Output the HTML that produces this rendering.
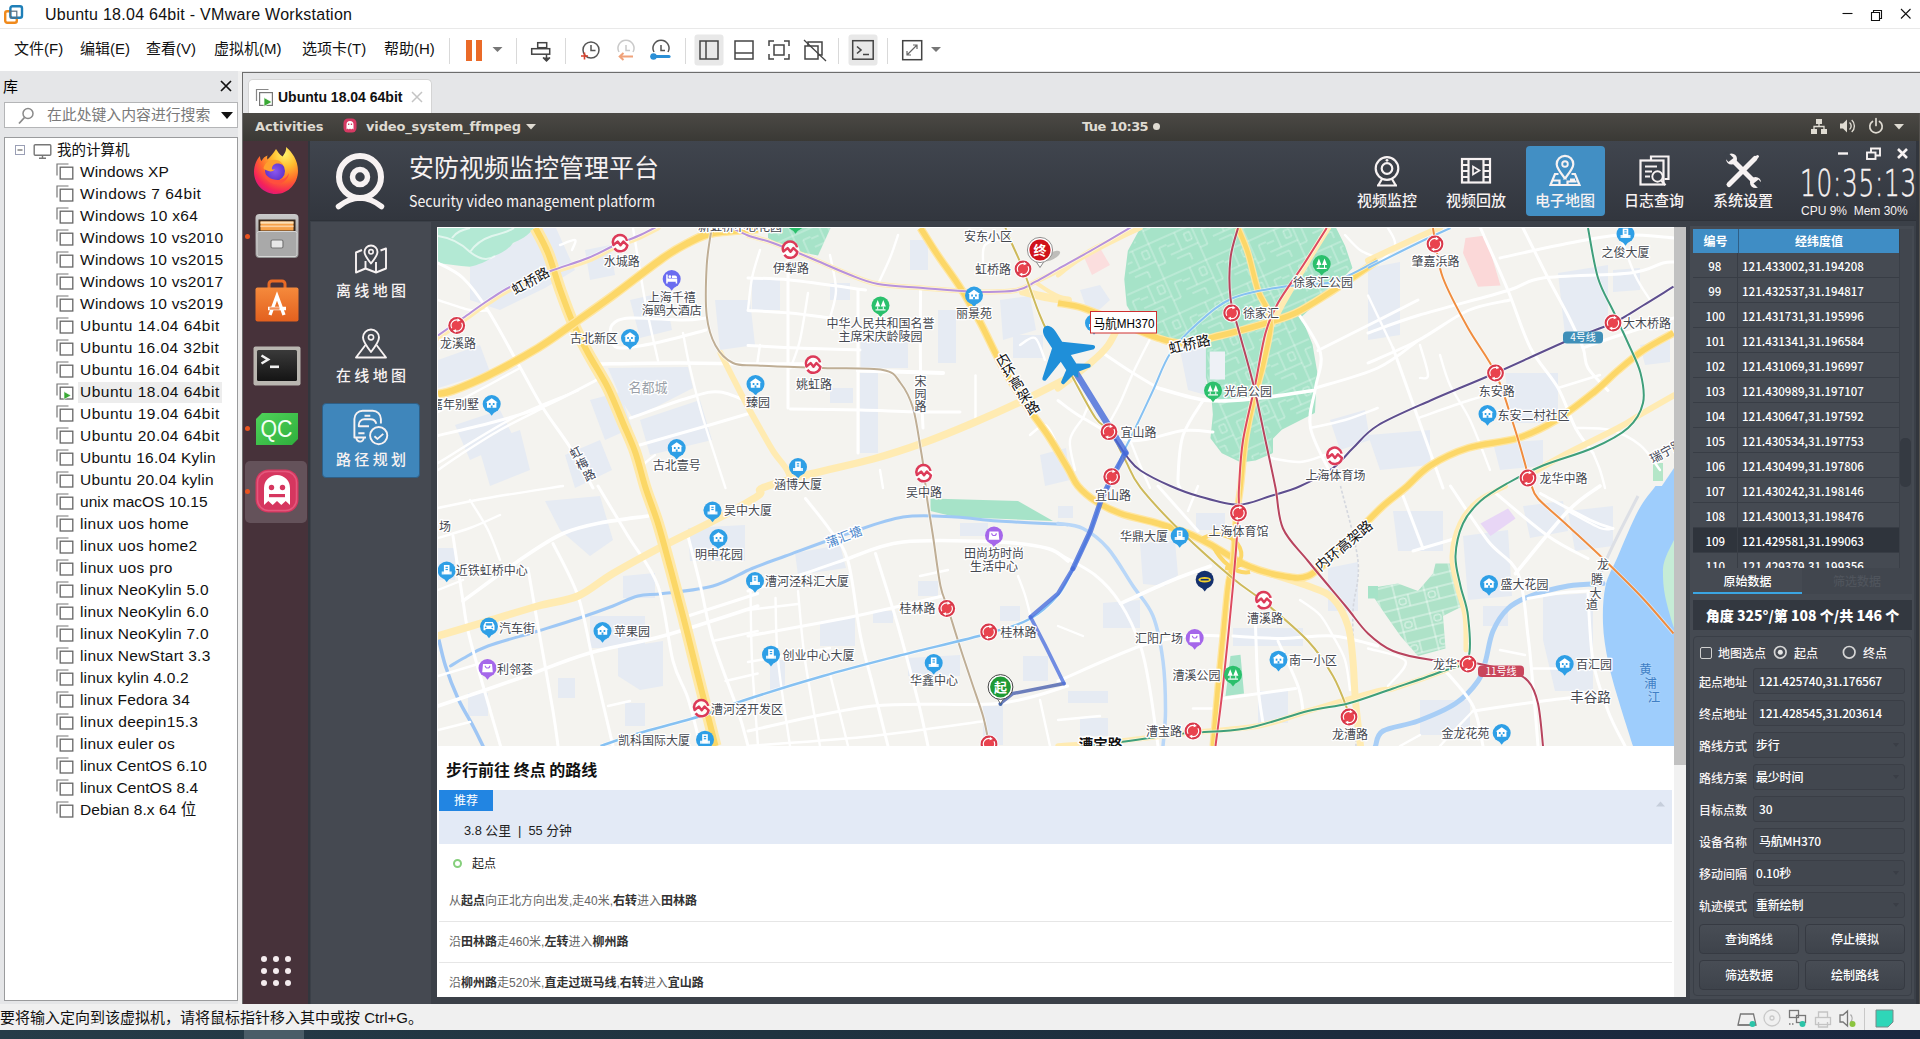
<!DOCTYPE html>
<html lang="zh-CN">
<head>
<meta charset="utf-8">
<title>Ubuntu 18.04 64bit - VMware Workstation</title>
<style>
*{box-sizing:border-box;margin:0;padding:0}
html,body{width:1920px;height:1039px;overflow:hidden;background:#fff}
body{font-family:"Liberation Sans","Noto Sans CJK SC",sans-serif;color:#000;position:relative}
.abs{position:absolute}
svg{display:block}
i{font-style:normal}
/* ---------- VMware chrome ---------- */
#titlebar{position:absolute;left:0;top:0;width:1920px;height:29px;background:#fff;border-bottom:1px solid #e9e9e9}
#titlebar .t{position:absolute;left:45px;top:5px;font-size:16px;letter-spacing:.27px;line-height:20px;color:#111;white-space:nowrap}
#menubar{position:absolute;left:0;top:29px;width:1920px;height:42px;background:#fff}
#menubar .m{position:absolute;top:10px;font-size:15px;line-height:20px;color:#111;white-space:nowrap}
#lib{position:absolute;left:0;top:71px;width:240px;height:933px;background:#e5e6e8}
#lib .hd{position:absolute;left:3px;top:6px;font-size:15px;line-height:20px}
#search{position:absolute;left:4px;top:31px;width:234px;height:26px;background:#fff;border:1px solid #b4b5b7}
#search .ph{position:absolute;left:42px;top:2px;font-size:14.85px;line-height:20px;color:#7a7a7a;white-space:nowrap}
#tree{position:absolute;left:4px;top:66px;width:234px;height:864px;background:#fff;border:1px solid #9a9b9d}
#tree .it{position:absolute;left:75px;height:20px;font-size:15.5px;line-height:20px;white-space:nowrap;color:#111}
#tree .ic{position:absolute;left:51px;width:18px;height:17px}
#vmarea{position:absolute;left:238px;top:71px;width:1682px;height:933px;background:#e5e6e8}
#vmarea:before{content:"";position:absolute;left:0;top:0;width:4px;height:933px;background:#f0f0f0}
#tabline{position:absolute;left:4px;top:1px;width:1678px;height:1px;background:#6d6d6d}
#vline{position:absolute;left:4px;top:1px;width:1px;height:932px;background:#6d6d6d}
#tab{position:absolute;left:10px;top:8px;width:184px;height:35px;background:#fff;border-radius:5px 5px 0 0;border:1px solid #d4d4d4;border-bottom:none}
#tab .tx{position:absolute;left:29px;top:7px;font-size:14px;font-weight:bold;line-height:20px;font-family:"Liberation Sans",sans-serif;white-space:nowrap;color:#111}
#statusbar{position:absolute;left:0;top:1004px;width:1920px;height:27px;background:#f0f0f0}
#statusbar .tx{position:absolute;left:0;top:4px;font-size:15px;line-height:20px;color:#111;white-space:nowrap}
#taskbar{position:absolute;left:0;top:1030px;width:1920px;height:9px;background:linear-gradient(90deg,#263c48,#1f3340 40%,#1c2b3d 70%,#1a2740)}
/* ---------- Ubuntu ---------- */
#vm{position:absolute;left:243px;top:113px;width:1677px;height:891px;background:#32363d;overflow:hidden}
#topbar{position:absolute;left:0;top:0;width:1677px;height:28px;background:linear-gradient(#4b4945,#3a3935);color:#dfdbd2;font-family:"DejaVu Sans","Liberation Sans",sans-serif;font-size:13px;font-weight:bold}
#topbar span{position:absolute;top:4px;line-height:20px;white-space:nowrap}
#dock{position:absolute;left:0;top:28px;width:65px;height:863px;background:#47323a}
#vm:after{content:"";position:absolute;right:0;top:0;width:1px;height:891px;background:#55524e}
/* ---------- App ---------- */
#app{position:absolute;left:67px;top:28px;width:1606px;height:863px;background:#3b4048;font-family:"Noto Sans CJK SC","Liberation Sans",sans-serif;color:#fff;font-weight:500}
#apphead{position:absolute;left:0;top:0;width:1606px;height:80px;background:linear-gradient(#40454e,#32363e);border-bottom:1px solid #2e3239}
#apptitle{font-size:25px;line-height:36px;font-weight:400;white-space:nowrap;color:#f7f2f2}
#appsub{font-size:15.5px;line-height:22px;transform-origin:0 50%;transform:scaleX(.914);font-weight:400;white-space:nowrap;color:#f7f2f2}
.nb{width:80px;text-align:center;font-size:15px;line-height:22px;margin-top:-1.5px;color:#f7f2f2;white-space:nowrap}
.lb{width:80px;text-align:center;font-size:15px;line-height:22px;letter-spacing:3.4px;text-indent:3.4px;color:#f7f2f2;white-space:nowrap;font-weight:500}
#lcd{font-family:"DejaVu Sans Light","DejaVu Sans","Liberation Sans",sans-serif;font-weight:200;font-size:34px;line-height:36px;letter-spacing:1px;color:#f7f2f2;white-space:nowrap;transform-origin:0 0;transform:scale(.728,1.09);-webkit-text-stroke:.45px #f7f2f2}
#cpu{font-size:12px;line-height:18px;white-space:nowrap;color:#f7f2f2;font-family:"Liberation Sans",sans-serif;font-weight:400}
#tbl .th{position:absolute;top:0;height:24px;background:#3f8dc5;text-align:center;font-size:12px;line-height:24px;font-weight:700;color:#fff}
#tbl .tr{position:absolute;left:0;width:206px;height:25px;border-bottom:1px solid #383d45;font-size:12px;line-height:25px;color:#fff}
#tbl .tr.sel{background:#2f343c}
#tbl .c1{position:absolute;left:0;width:45px;text-align:center;border-right:1px solid #383d45;height:25px}
#tbl .c1 i{display:inline-block;transform:scaleX(.96)}
#tbl .c2{position:absolute;left:49px;white-space:nowrap;transform-origin:0 50%;transform:scaleX(.96)}
.tabt{text-align:center;font-size:12px;line-height:22px}
#info{background:#333840;text-align:center;font-size:14px;font-weight:900;line-height:30px;white-space:nowrap}
.fl{font-size:12px;line-height:21px;white-space:nowrap;color:#f7f2f2}
.inp{width:152px;height:26px;border:1px solid #3a3e46;border-radius:3px;background:#42474f;font-size:12px;letter-spacing:-.2px;line-height:24px;white-space:nowrap;color:#fff}
.inp i{position:absolute;right:5px;top:10px;width:0;height:0;border:3px solid transparent;border-top:4px solid #3a3e46}
.btn{width:100px;height:30px;border:1px solid #363a42;border-radius:4px;background:linear-gradient(#484d55,#3e434b);text-align:center;font-size:12px;line-height:28px;color:#fff}
#web{background:#fff;overflow:hidden;font-weight:400}
#route{background:#fff;color:#222;font-weight:400}
.rt{font-size:16px;font-weight:700;line-height:22px;color:#111;white-space:nowrap}
.st{font-size:12px;line-height:20px;color:#666;white-space:nowrap;font-family:"Liberation Sans","Noto Sans CJK SC",sans-serif}
.st b{color:#333;font-weight:700}
</style>
</head>
<body>
<div id="titlebar">
<svg class="abs" style="left:4px;top:5px" width="20" height="19" viewBox="0 0 20 19"><rect x="1.2" y="6.2" width="11.6" height="11.6" rx="2" fill="none" stroke="#f08a1c" stroke-width="2.4"/><rect x="6.4" y="1.2" width="11.6" height="11.6" rx="2" fill="#fff" stroke="#1e7fb8" stroke-width="2.4"/><rect x="6.4" y="6.2" width="6.4" height="6.6" fill="none" stroke="#5a6f80" stroke-width="1.2"/></svg>
<div class="t">Ubuntu 18.04 64bit - VMware Workstation</div>
<svg class="abs" style="left:1835px;top:6px" width="80" height="18" viewBox="0 0 80 18"><g stroke="#111" stroke-width="1.1" fill="none"><path d="M7.5 7.5h10"/><path d="M36.5 6.5h8v8h-8z"/><path d="M38.5 6.5v-2h8v8h-2"/><path d="M66 3l9.5 9.5M75.500 3L66 12.500"/></g></svg>
</div>
<div id="menubar">
<div class="m" style="left:14px">文件(F)</div>
<div class="m" style="left:80px">编辑(E)</div>
<div class="m" style="left:146px">查看(V)</div>
<div class="m" style="left:214px">虚拟机(M)</div>
<div class="m" style="left:302px">选项卡(T)</div>
<div class="m" style="left:384px">帮助(H)</div>
<svg class="abs" style="left:440px;top:0" width="520" height="42" viewBox="440 29 520 42">
<g stroke="#d9d9d9" stroke-width="1"><path d="M449.500 38v26M516.500 38v26M565.500 38v26M685.500 38v26M838.500 38v26M887.500 38v26"/></g>
<rect x="466" y="40" width="6" height="21" fill="#ea6a28"/><rect x="476" y="40" width="6" height="21" fill="#ea6a28"/>
<path d="M492.500 47h10l-5 5z" fill="#777"/>
<g fill="none" stroke="#444" stroke-width="1.5"><rect x="537.700" y="42.700" width="9" height="5"/><rect x="531.700" y="48.700" width="18" height="5.500"/><path d="M546.500 54.500v6"/><path d="M543 57.500l3.500 3.500 3.500-3.500" fill="#444"/></g>
<g fill="none" stroke="#555" stroke-width="1.500"><circle cx="591" cy="50" r="8"/><path d="M591 45v5.500h4.500"/></g><path d="M584.500 52.500v7M581 56h7" stroke="#d8432e" stroke-width="1.600" fill="none"/>
<g fill="none" stroke="#c9c9c9" stroke-width="1.500"><path d="M619 52a8 8 0 1 1 14 0"/><path d="M626 45v5.500h4"/></g><path d="M633 56.500h-13M623.500 53l-3.800 3.500 3.800 3.500" stroke="#f0a27a" stroke-width="2" fill="none"/>
<g fill="none" stroke="#555" stroke-width="1.500"><path d="M654 52a8 8 0 1 1 14 0"/><path d="M661 45v5.500h4"/></g><path d="M652 56.500h17" stroke="#2a8fd6" stroke-width="3.200" stroke-linecap="round" fill="none"/><circle cx="653.500" cy="56.500" r="3.200" fill="#2a8fd6"/>
<rect x="694.500" y="34.500" width="29" height="31" rx="3" fill="#e8e8e8"/>
<g fill="none" stroke="#444" stroke-width="1.500"><rect x="700" y="41" width="18" height="18"/><path d="M706 41v18"/>
<rect x="735" y="41" width="18" height="18"/><path d="M735 53h18"/>
<rect x="774" y="45" width="10" height="10"/><path d="M769 46v-5h5M784 41h5v5M789 54v5h-5M774 59h-5v-5"/>
<path d="M808 46v-4h14v13h-4"/><rect x="805" y="46" width="13" height="13"/></g><path d="M804 40l22 21" stroke="#444" stroke-width="1.300"/>
<rect x="848.500" y="34.500" width="29" height="31" rx="3" fill="#e8e8e8"/>
<rect x="852.700" y="40.700" width="20.500" height="18.500" fill="none" stroke="#444" stroke-width="1.500"/><path d="M857 46.500l4 3.500-4 3.500M863 54.500h6" stroke="#444" stroke-width="1.600" fill="none"/>
<rect x="902.700" y="40.700" width="19" height="19" fill="none" stroke="#444" stroke-width="1.500"/><path d="M907 55l10-10M907 51v4h4M913 45h4v4" stroke="#666" stroke-width="1.200" fill="none"/>
<path d="M931 47h10l-5 5z" fill="#777"/>
</svg>
</div>
<div id="lib"><div class="hd">库</div>
<svg class="abs" style="left:219px;top:8px" width="14" height="14" viewBox="0 0 14 14"><path d="M2 2l10 10M12 2L2 12" stroke="#111" stroke-width="1.700" fill="none"/></svg>
<div id="search"><svg class="abs" style="left:12px;top:4px" width="18" height="18" viewBox="0 0 18 18"><circle cx="11" cy="6.500" r="5" fill="none" stroke="#8a8a8a" stroke-width="1.500"/><path d="M7.500 10.500L2 16.500" stroke="#8a8a8a" stroke-width="1.800"/></svg><div class="ph">在此处键入内容进行搜索</div><svg class="abs" style="left:215px;top:8px" width="14" height="9" viewBox="0 0 14 9"><path d="M1 1h12L7 8z" fill="#111"/></svg></div>
<div id="tree">
<svg class="abs" style="left:10px;top:5.500px" width="40" height="16" viewBox="0 0 40 16"><rect x="0.500" y="1.500" width="9" height="9" fill="#fff" stroke="#9a9fb5"/><path d="M2.500 6h5" stroke="#444" stroke-width="1"/><rect x="19.200" y="0.700" width="16.600" height="10.600" rx="1" fill="#fff" stroke="#777" stroke-width="1.400"/><path d="M24 14.300h7M27.500 11.500v2.500" stroke="#777" stroke-width="1.400"/></svg>
<div class="it" style="left:52px;top:2px;font-size:14.500px">我的计算机</div>
<svg class="ic" style="top:25px" viewBox="0 0 18 17"><path d="M1 12.500V1h11.500" fill="none" stroke="#777" stroke-width="1.200"/><rect x="4.200" y="4.200" width="12.600" height="11.800" fill="#fff" stroke="#666" stroke-width="1.300"/></svg>
<div class="it" style="top:24px;letter-spacing:0.11px">Windows XP</div>
<svg class="ic" style="top:47px" viewBox="0 0 18 17"><path d="M1 12.500V1h11.500" fill="none" stroke="#777" stroke-width="1.200"/><rect x="4.200" y="4.200" width="12.600" height="11.800" fill="#fff" stroke="#666" stroke-width="1.300"/></svg>
<div class="it" style="top:46px;letter-spacing:0.513px">Windows 7 64bit</div>
<svg class="ic" style="top:69px" viewBox="0 0 18 17"><path d="M1 12.500V1h11.500" fill="none" stroke="#777" stroke-width="1.200"/><rect x="4.200" y="4.200" width="12.600" height="11.800" fill="#fff" stroke="#666" stroke-width="1.300"/></svg>
<div class="it" style="top:68px;letter-spacing:0.314px">Windows 10 x64</div>
<svg class="ic" style="top:91px" viewBox="0 0 18 17"><path d="M1 12.500V1h11.500" fill="none" stroke="#777" stroke-width="1.200"/><rect x="4.200" y="4.200" width="12.600" height="11.800" fill="#fff" stroke="#666" stroke-width="1.300"/></svg>
<div class="it" style="top:90px;letter-spacing:0.271px">Windows 10 vs2010</div>
<svg class="ic" style="top:113px" viewBox="0 0 18 17"><path d="M1 12.500V1h11.500" fill="none" stroke="#777" stroke-width="1.200"/><rect x="4.200" y="4.200" width="12.600" height="11.800" fill="#fff" stroke="#666" stroke-width="1.300"/></svg>
<div class="it" style="top:112px;letter-spacing:0.271px">Windows 10 vs2015</div>
<svg class="ic" style="top:135px" viewBox="0 0 18 17"><path d="M1 12.500V1h11.500" fill="none" stroke="#777" stroke-width="1.200"/><rect x="4.200" y="4.200" width="12.600" height="11.800" fill="#fff" stroke="#666" stroke-width="1.300"/></svg>
<div class="it" style="top:134px;letter-spacing:0.271px">Windows 10 vs2017</div>
<svg class="ic" style="top:157px" viewBox="0 0 18 17"><path d="M1 12.500V1h11.500" fill="none" stroke="#777" stroke-width="1.200"/><rect x="4.200" y="4.200" width="12.600" height="11.800" fill="#fff" stroke="#666" stroke-width="1.300"/></svg>
<div class="it" style="top:156px;letter-spacing:0.271px">Windows 10 vs2019</div>
<svg class="ic" style="top:179px" viewBox="0 0 18 17"><path d="M1 12.500V1h11.500" fill="none" stroke="#777" stroke-width="1.200"/><rect x="4.200" y="4.200" width="12.600" height="11.800" fill="#fff" stroke="#666" stroke-width="1.300"/></svg>
<div class="it" style="top:178px;letter-spacing:0.483px">Ubuntu 14.04 64bit</div>
<svg class="ic" style="top:201px" viewBox="0 0 18 17"><path d="M1 12.500V1h11.500" fill="none" stroke="#777" stroke-width="1.200"/><rect x="4.200" y="4.200" width="12.600" height="11.800" fill="#fff" stroke="#666" stroke-width="1.300"/></svg>
<div class="it" style="top:200px;letter-spacing:0.456px">Ubuntu 16.04 32bit</div>
<svg class="ic" style="top:223px" viewBox="0 0 18 17"><path d="M1 12.500V1h11.500" fill="none" stroke="#777" stroke-width="1.200"/><rect x="4.200" y="4.200" width="12.600" height="11.800" fill="#fff" stroke="#666" stroke-width="1.300"/></svg>
<div class="it" style="top:222px;letter-spacing:0.483px">Ubuntu 16.04 64bit</div>
<div class="abs" style="left:73px;top:244px;width:144px;height:21px;background:#ededed"></div>
<svg class="ic" style="top:245px" viewBox="0 0 18 17"><path d="M1 12.500V1h11.500" fill="none" stroke="#777" stroke-width="1.200"/><rect x="4.200" y="4.200" width="12.600" height="11.800" fill="#fff" stroke="#666" stroke-width="1.300"/><path d="M8 8.500v8l7-4z" fill="#3aa935" stroke="#fff" stroke-width=".6"/></svg>
<div class="it" style="top:244px;letter-spacing:0.483px">Ubuntu 18.04 64bit</div>
<svg class="ic" style="top:267px" viewBox="0 0 18 17"><path d="M1 12.500V1h11.500" fill="none" stroke="#777" stroke-width="1.200"/><rect x="4.200" y="4.200" width="12.600" height="11.800" fill="#fff" stroke="#666" stroke-width="1.300"/></svg>
<div class="it" style="top:266px;letter-spacing:0.483px">Ubuntu 19.04 64bit</div>
<svg class="ic" style="top:289px" viewBox="0 0 18 17"><path d="M1 12.500V1h11.500" fill="none" stroke="#777" stroke-width="1.200"/><rect x="4.200" y="4.200" width="12.600" height="11.800" fill="#fff" stroke="#666" stroke-width="1.300"/></svg>
<div class="it" style="top:288px;letter-spacing:0.483px">Ubuntu 20.04 64bit</div>
<svg class="ic" style="top:311px" viewBox="0 0 18 17"><path d="M1 12.500V1h11.500" fill="none" stroke="#777" stroke-width="1.200"/><rect x="4.200" y="4.200" width="12.600" height="11.800" fill="#fff" stroke="#666" stroke-width="1.300"/></svg>
<div class="it" style="top:310px;letter-spacing:0.272px">Ubuntu 16.04 Kylin</div>
<svg class="ic" style="top:333px" viewBox="0 0 18 17"><path d="M1 12.500V1h11.500" fill="none" stroke="#777" stroke-width="1.200"/><rect x="4.200" y="4.200" width="12.600" height="11.800" fill="#fff" stroke="#666" stroke-width="1.300"/></svg>
<div class="it" style="top:332px;letter-spacing:0.311px">Ubuntu 20.04 kylin</div>
<svg class="ic" style="top:355px" viewBox="0 0 18 17"><path d="M1 12.500V1h11.500" fill="none" stroke="#777" stroke-width="1.200"/><rect x="4.200" y="4.200" width="12.600" height="11.800" fill="#fff" stroke="#666" stroke-width="1.300"/></svg>
<div class="it" style="top:354px;letter-spacing:0.006px">unix macOS 10.15</div>
<svg class="ic" style="top:377px" viewBox="0 0 18 17"><path d="M1 12.500V1h11.500" fill="none" stroke="#777" stroke-width="1.200"/><rect x="4.200" y="4.200" width="12.600" height="11.800" fill="#fff" stroke="#666" stroke-width="1.300"/></svg>
<div class="it" style="top:376px;letter-spacing:0.343px">linux uos home</div>
<svg class="ic" style="top:399px" viewBox="0 0 18 17"><path d="M1 12.500V1h11.500" fill="none" stroke="#777" stroke-width="1.200"/><rect x="4.200" y="4.200" width="12.600" height="11.800" fill="#fff" stroke="#666" stroke-width="1.300"/></svg>
<div class="it" style="top:398px;letter-spacing:0.307px">linux uos home2</div>
<svg class="ic" style="top:421px" viewBox="0 0 18 17"><path d="M1 12.500V1h11.500" fill="none" stroke="#777" stroke-width="1.200"/><rect x="4.200" y="4.200" width="12.600" height="11.800" fill="#fff" stroke="#666" stroke-width="1.300"/></svg>
<div class="it" style="top:420px;letter-spacing:0.369px">linux uos pro</div>
<svg class="ic" style="top:443px" viewBox="0 0 18 17"><path d="M1 12.500V1h11.500" fill="none" stroke="#777" stroke-width="1.200"/><rect x="4.200" y="4.200" width="12.600" height="11.800" fill="#fff" stroke="#666" stroke-width="1.300"/></svg>
<div class="it" style="top:442px;letter-spacing:0.261px">linux NeoKylin 5.0</div>
<svg class="ic" style="top:465px" viewBox="0 0 18 17"><path d="M1 12.500V1h11.500" fill="none" stroke="#777" stroke-width="1.200"/><rect x="4.200" y="4.200" width="12.600" height="11.800" fill="#fff" stroke="#666" stroke-width="1.300"/></svg>
<div class="it" style="top:464px;letter-spacing:0.261px">linux NeoKylin 6.0</div>
<svg class="ic" style="top:487px" viewBox="0 0 18 17"><path d="M1 12.500V1h11.500" fill="none" stroke="#777" stroke-width="1.200"/><rect x="4.200" y="4.200" width="12.600" height="11.800" fill="#fff" stroke="#666" stroke-width="1.300"/></svg>
<div class="it" style="top:486px;letter-spacing:0.261px">linux NeoKylin 7.0</div>
<svg class="ic" style="top:509px" viewBox="0 0 18 17"><path d="M1 12.500V1h11.500" fill="none" stroke="#777" stroke-width="1.200"/><rect x="4.200" y="4.200" width="12.600" height="11.800" fill="#fff" stroke="#666" stroke-width="1.300"/></svg>
<div class="it" style="top:508px;letter-spacing:0.267px">linux NewStart 3.3</div>
<svg class="ic" style="top:531px" viewBox="0 0 18 17"><path d="M1 12.500V1h11.500" fill="none" stroke="#777" stroke-width="1.200"/><rect x="4.200" y="4.200" width="12.600" height="11.800" fill="#fff" stroke="#666" stroke-width="1.300"/></svg>
<div class="it" style="top:530px;letter-spacing:0.171px">linux kylin 4.0.2</div>
<svg class="ic" style="top:553px" viewBox="0 0 18 17"><path d="M1 12.500V1h11.500" fill="none" stroke="#777" stroke-width="1.200"/><rect x="4.200" y="4.200" width="12.600" height="11.800" fill="#fff" stroke="#666" stroke-width="1.300"/></svg>
<div class="it" style="top:552px;letter-spacing:0.213px">linux Fedora 34</div>
<svg class="ic" style="top:575px" viewBox="0 0 18 17"><path d="M1 12.500V1h11.500" fill="none" stroke="#777" stroke-width="1.200"/><rect x="4.200" y="4.200" width="12.600" height="11.800" fill="#fff" stroke="#666" stroke-width="1.300"/></svg>
<div class="it" style="top:574px;letter-spacing:0.337px">linux deepin15.3</div>
<svg class="ic" style="top:597px" viewBox="0 0 18 17"><path d="M1 12.500V1h11.500" fill="none" stroke="#777" stroke-width="1.200"/><rect x="4.200" y="4.200" width="12.600" height="11.800" fill="#fff" stroke="#666" stroke-width="1.300"/></svg>
<div class="it" style="top:596px;letter-spacing:0.264px">linux euler os</div>
<svg class="ic" style="top:619px" viewBox="0 0 18 17"><path d="M1 12.500V1h11.500" fill="none" stroke="#777" stroke-width="1.200"/><rect x="4.200" y="4.200" width="12.600" height="11.800" fill="#fff" stroke="#666" stroke-width="1.300"/></svg>
<div class="it" style="top:618px;letter-spacing:0.065px">linux CentOS 6.10</div>
<svg class="ic" style="top:641px" viewBox="0 0 18 17"><path d="M1 12.500V1h11.500" fill="none" stroke="#777" stroke-width="1.200"/><rect x="4.200" y="4.200" width="12.600" height="11.800" fill="#fff" stroke="#666" stroke-width="1.300"/></svg>
<div class="it" style="top:640px;letter-spacing:0.069px">linux CentOS 8.4</div>
<svg class="ic" style="top:663px" viewBox="0 0 18 17"><path d="M1 12.500V1h11.500" fill="none" stroke="#777" stroke-width="1.200"/><rect x="4.200" y="4.200" width="12.600" height="11.800" fill="#fff" stroke="#666" stroke-width="1.300"/></svg>
<div class="it" style="top:662px;letter-spacing:0.053px">Debian 8.x 64 位</div>
</div></div>
<div id="vmarea"><div id="tabline"></div><div id="vline"></div><div id="tab"><svg class="abs" style="left:6px;top:8px" width="20" height="20" viewBox="0 0 20 20"><path d="M1.500 13V1.500h12" fill="none" stroke="#888" stroke-width="1.200"/><rect x="4.600" y="4.600" width="12.800" height="12.800" fill="#fff" stroke="#777" stroke-width="1.200"/><path d="M9 9.500v9l8-4.500z" fill="#3aa935" stroke="#fff" stroke-width=".7"/></svg><div class="tx">Ubuntu 18.04 64bit</div><svg class="abs" style="left:161px;top:10px" width="14" height="14" viewBox="0 0 14 14"><path d="M2 2l10 10M12 2L2 12" stroke="#c4c4c4" stroke-width="1.500" fill="none"/></svg></div></div>
<div id="vm">
<div id="topbar">
<span style="left:12px">Activities</span>
<svg class="abs" style="left:100px;top:5px" width="14" height="15" viewBox="0 0 14 15"><rect x="0.500" y="0.500" width="13" height="14" rx="4.500" fill="#d63a63"/><path d="M3.500 11.500V6.500a3.500 3.500 0 0 1 7 0v5l-1.200-1-1.150 1-1.150-1-1.150 1-1.150-1z" fill="#fff"/><rect x="5" y="5.500" width="1.300" height="1.500" fill="#d63a63"/><rect x="7.800" y="5.500" width="1.300" height="1.500" fill="#d63a63"/></svg>
<span style="left:123px;letter-spacing:-.15px">video_system_ffmpeg</span>
<svg class="abs" style="left:282px;top:10px" width="12" height="8" viewBox="0 0 12 8"><path d="M1 1h10L6 6.500z" fill="#dfdbd2"/></svg>
<span style="left:839px;letter-spacing:-.6px">Tue 10:35</span>
<div class="abs" style="left:910px;top:10px;width:7px;height:7px;border-radius:50%;background:#dfdbd2"></div>
<svg class="abs" style="left:1565px;top:4px" width="100" height="20" viewBox="1808 117 100 20"><g fill="#dfdbd2"><rect x="1816" y="119" width="6" height="5"/><rect x="1811" y="129" width="6" height="5"/><rect x="1821" y="129" width="6" height="5"/></g><path d="M1819 124v3M1814 129v-2.500h10v2.500" stroke="#dfdbd2" stroke-width="1.300" fill="none"/><path d="M1840 123.500h3l4-4v13l-4-4h-3z" fill="#dfdbd2"/><path d="M1849.500 122.500a4.500 4.500 0 0 1 0 7M1851.700 120a8 8 0 0 1 0 12" stroke="#dfdbd2" stroke-width="1.400" fill="none"/><path d="M1872.500 121.500a6.200 6.200 0 1 0 7 0M1876 118.500v7" stroke="#dfdbd2" stroke-width="1.700" fill="none" stroke-linecap="round"/><path d="M1894 124h10l-5 5.500z" fill="#dfdbd2"/></svg>
</div>
<div id="dock">
<div class="abs" style="left:2px;top:320px;width:62px;height:62px;border-radius:5px;background:#64525a"></div>
<div class="abs" style="left:2px;top:92.5px;width:5px;height:5px;border-radius:50%;background:#e95420"></div>
<div class="abs" style="left:2px;top:284.5px;width:5px;height:5px;border-radius:50%;background:#e95420"></div>
<div class="abs" style="left:2px;top:347.5px;width:5px;height:5px;border-radius:50%;background:#e95420"></div>
<svg class="abs" style="left:9px;top:5px" width="48" height="50" viewBox="0 0 48 50">
<defs><radialGradient id="ff1" cx="70%" cy="15%" r="95%"><stop offset="0" stop-color="#fff36b"/><stop offset=".3" stop-color="#ffbd2f"/><stop offset=".6" stop-color="#ff6a2b"/><stop offset=".85" stop-color="#f5225a"/><stop offset="1" stop-color="#d41786"/></radialGradient>
<radialGradient id="ff2" cx="50%" cy="50%" r="60%"><stop offset="0" stop-color="#8a57f0"/><stop offset="1" stop-color="#5a2fc4"/></radialGradient></defs>
<path d="M24 3c2 3 3 5 6.500 7.500C35 5 34 2 34 1c6 5 12 13 12 24 0 12-9.500 23-22 23S2 38 2 26c0-7 3-13 6-16 0 2 .5 4 1.500 5 1.500-3 4-5 6-5.500-.5 1.500-.5 3 0 4 3-3 6-6 8.500-10.500z" fill="url(#ff1)"/>
<circle cx="23" cy="25" r="10" fill="url(#ff2)"/>
<path d="M11.500 22c2-7 9-10 15-7.500 2.500 1 4 3 4.500 5-2.500-2-5.500-2.500-8-1.500-2.500 1-3.500 3.500-3 5.500 1 .2 2 0 3-.5-1 2-4 3-6.500 2-3-1-5-2-5-3z" fill="#ffa02e"/>
<path d="M11 24c0 8 6 14 13.500 14 7 0 12-5 12.500-11-2 4.500-6 7-11 7-7 0-12.500-4-15-10z" fill="#ff4f3e"/>
</svg>
<svg class="abs" style="left:11px;top:72px" width="46" height="46" viewBox="0 0 46 46">
<defs><linearGradient id="fg" x1="0" y1="0" x2="0" y2="1"><stop offset="0" stop-color="#c9c9c9"/><stop offset="1" stop-color="#8f8f8f"/></linearGradient></defs>
<rect x="1.500" y="1" width="43" height="44" rx="4" fill="url(#fg)"/><rect x="4.500" y="6.500" width="37" height="12" fill="#3a2a1e"/>
<rect x="6.500" y="8.500" width="33" height="9" fill="#f6a24a"/><rect x="6.500" y="8.500" width="33" height="2.200" fill="#fde1b8"/><rect x="6.500" y="12.500" width="33" height="1.600" fill="#fbd0a0"/>
<rect x="3" y="18.500" width="40" height="25" rx="2" fill="#a9a9a9" stroke="#d6d6d6" stroke-width="1"/><rect x="17" y="27" width="12" height="8" rx="1.500" fill="#e8e8e8" stroke="#777" stroke-width="1.200"/></svg>
<svg class="abs" style="left:11px;top:136px" width="46" height="46" viewBox="0 0 46 46">
<defs><linearGradient id="sg" x1="0" y1="0" x2="0" y2="1"><stop offset="0" stop-color="#f58a3c"/><stop offset="1" stop-color="#e3601e"/></linearGradient></defs>
<path d="M15 12V7a3 3 0 0 1 3-3h10a3 3 0 0 1 3 3v5" fill="none" stroke="#e86a25" stroke-width="3"/>
<rect x="1.500" y="10.500" width="43" height="34" rx="2" fill="url(#sg)"/>
<path d="M16 38l7-19 7 19M14 31.500h18" stroke="#fff" stroke-width="3.300" fill="none"/><rect x="15.500" y="30.300" width="10" height="2.400" fill="#f3905a"/></svg>
<svg class="abs" style="left:10px;top:205px" width="48" height="40" viewBox="0 0 48 40">
<defs><linearGradient id="tg" x1="0" y1="0" x2="0" y2="1"><stop offset="0" stop-color="#3a3a3a"/><stop offset="1" stop-color="#141414"/></linearGradient></defs>
<rect x="0.500" y="0.500" width="47" height="39" rx="2" fill="#b9b6b0"/><rect x="4" y="4" width="40" height="31" rx="1.500" fill="url(#tg)"/>
<path d="M8.500 9.500l6.500 4-6.500 4" stroke="#f1f1f1" stroke-width="2.600" fill="none"/><rect x="17" y="19.500" width="9" height="2.600" fill="#f1f1f1"/></svg>
<svg class="abs" style="left:12px;top:271px" width="44" height="34" viewBox="0 0 44 34">
<defs><linearGradient id="qg" x1="0" y1="0" x2="1" y2="1"><stop offset="0" stop-color="#4fd45a"/><stop offset="1" stop-color="#2fae3c"/></linearGradient></defs>
<path d="M7 1h36v26l-6 6H1V7z" fill="url(#qg)"/><text x="21.500" y="25" font-family="Liberation Sans,sans-serif" font-size="24" text-anchor="middle" fill="#f3fff3" textLength="32" lengthAdjust="spacingAndGlyphs">QC</text></svg>
<svg class="abs" style="left:12px;top:328px" width="44" height="44" viewBox="0 0 44 44">
<rect x="0.500" y="0.500" width="43" height="43" rx="13" fill="#d6365f"/><rect x="2.500" y="2.500" width="39" height="39" rx="11" fill="none" stroke="#e4577c" stroke-width="1.500"/>
<path d="M9 36V19a13 13 0 0 1 26 0v17l-4.300-4-4.400 4-4.300-4-4.300 4-4.400-4z" fill="#fff"/>
<circle cx="16.500" cy="18.500" r="2.700" fill="#d6365f"/><circle cx="27.500" cy="18.500" r="2.700" fill="#d6365f"/><rect x="14" y="25" width="16" height="3.200" fill="#d6365f"/></svg>
<svg class="abs" style="left:17px;top:814px" width="32" height="32" viewBox="0 0 32 32"><circle cx="4" cy="4" r="3" fill="#f4ecee"/><circle cx="4" cy="16" r="3" fill="#f4ecee"/><circle cx="4" cy="28" r="3" fill="#f4ecee"/><circle cx="16" cy="4" r="3" fill="#f4ecee"/><circle cx="16" cy="16" r="3" fill="#f4ecee"/><circle cx="16" cy="28" r="3" fill="#f4ecee"/><circle cx="28" cy="4" r="3" fill="#f4ecee"/><circle cx="28" cy="16" r="3" fill="#f4ecee"/><circle cx="28" cy="28" r="3" fill="#f4ecee"/></svg>
</div>
<div id="app">
<div id="apphead">
<svg class="abs" style="left:24px;top:9px" width="52" height="62" viewBox="334 150 52 62"><circle cx="360" cy="177" r="21" fill="none" stroke="#f7f2f2" stroke-width="6"/><circle cx="360" cy="177" r="7.500" fill="none" stroke="#f7f2f2" stroke-width="5.500"/><path d="M338.500 206.500q21.500-17 43 0" fill="none" stroke="#f7f2f2" stroke-width="5.500" stroke-linecap="round"/></svg>
<div class="abs" id="apptitle" style="left:99px;top:7px">安防视频监控管理平台</div>
<div class="abs" id="appsub" style="left:99px;top:48px">Security video management platform</div>
<div class="abs" style="left:1216px;top:5px;width:79px;height:70px;border-radius:4px;background:#428fc4"></div>
<div class="abs nb" style="left:1037px;top:49px">视频监控</div>
<div class="abs nb" style="left:1126px;top:49px">视频回放</div>
<div class="abs nb" style="left:1215px;top:49px">电子地图</div>
<div class="abs nb" style="left:1304px;top:49px">日志查询</div>
<div class="abs nb" style="left:1393px;top:49px">系统设置</div>
<svg class="abs" style="left:1050px;top:9px" width="420" height="42" viewBox="1360 150 420 42">
<g fill="none" stroke="#f7f2f2" stroke-width="2.200"><circle cx="1387" cy="168.500" r="11.300"/><circle cx="1387" cy="168.500" r="5.300"/><path d="M1382 179l-3.500 6M1392 179l3.500 6M1377 185.500h20"/></g><circle cx="1387" cy="160.300" r="1.400" fill="#f7f2f2"/>
<g fill="none" stroke="#f7f2f2" stroke-width="2.200"><rect x="1462" y="159" width="28" height="23.500"/><path d="M1468.500 159v23.500M1483.500 159v23.500M1462 165h6.500M1462 171h6.500M1462 177h6.500M1483.500 165h6.500M1483.500 171h6.500M1483.500 177h6.500"/><path d="M1473 166.500v8l6.500-4z" stroke-width="1.700"/></g>
<g fill="none" stroke="#f7f2f2" stroke-width="2.200"><path d="M1565 178.500c-5-6.500-8.300-10.500-8.300-14.300a8.300 8.300 0 0 1 16.600 0c0 3.800-3.300 7.800-8.300 14.300z"/><circle cx="1565" cy="164" r="2.800" stroke-width="1.900"/><path d="M1558.500 174h-3.500l-4.500 11h29l-4.500-11h-3.500M1553 180.500h6.500v4.500M1570 179.500h5M1567.500 184.500v-3h9"/></g>
<g fill="none" stroke="#f7f2f2" stroke-width="2.200"><path d="M1651 160v-3.500h17.500v22.500h-4"/><rect x="1640.500" y="160.500" width="23" height="24"/><path d="M1645 166.500h12M1645 171.500h7M1645 176.500h5" stroke-width="1.800"/><circle cx="1657.500" cy="176.500" r="5.200" fill="#3b4049" stroke-width="1.900"/><path d="M1661.300 180.500l4.200 4.700" stroke-width="2.200"/></g>
<g stroke="#f7f2f2" fill="none" stroke-linecap="round"><path d="M1729 184.500l26-26" stroke-width="5"/><path d="M1746 167l11.500-10.500" stroke-width="3"/><path d="M1733 160.500l22 22" stroke-width="5"/></g>
<circle cx="1731.500" cy="159" r="5.500" fill="#f7f2f2"/><path d="M1727 151.500l6.500 6.500-5 4-6-6.500z" fill="#3d424b"/><circle cx="1755.500" cy="182.500" r="5.500" fill="#f7f2f2"/><path d="M1760 190l-6.500-6.500 5-4 6 6.500z" fill="#383d46"/>
</svg>
<svg class="abs" style="left:1524px;top:5px" width="80" height="16" viewBox="1834 146 80 16"><path d="M1838 153.500h10" stroke="#f7f2f2" stroke-width="2.400"/><g fill="none" stroke="#f7f2f2" stroke-width="1.900"><rect x="1867" y="152.500" width="8.500" height="6.500"/><path d="M1871 152v-3.500h9v7h-4"/></g><path d="M1898 149l9 9M1907 149l-9 9" stroke="#f7f2f2" stroke-width="2.600"/></svg>
<div class="abs" id="lcd" style="left:1490px;top:22px">10:35:13</div>
<div class="abs" id="cpu" style="left:1491px;top:61px">CPU 9%&nbsp; Mem 30%</div>
</div>
<div class="abs" style="left:1px;top:81px;width:120px;height:782px;background:#454951"></div>
<div class="abs" style="left:12px;top:262px;width:98px;height:75px;border-radius:4px;background:#3f86bb;border:1px solid #2f5f86"></div>
<div class="abs lb" style="left:21px;top:138.0px">离线地图</div>
<div class="abs lb" style="left:21px;top:222.5px">在线地图</div>
<div class="abs lb" style="left:21px;top:307.0px">路径规划</div>
<svg class="abs" style="left:40px;top:99px" width="44" height="210" viewBox="350 240 44 210">
<g fill="none" stroke="#f7f2f2" stroke-width="1.900" stroke-linejoin="round"><path d="M1 1" /><path d="M362 250l-6 2.500v20l9.500-4 10.500 4 10-4v-20l-5.500 2"/><path d="M365.500 261v7.500M376 262v10.500"/><path d="M371 263.500c-4-5-6.500-8.200-6.500-11.500a6.500 6.500 0 0 1 13 0c0 3.300-2.500 6.500-6.500 11.500z"/><circle cx="371" cy="251.800" r="2.200" stroke-width="1.600"/>
<path d="M371 352c-5-6.500-8-10.500-8-14.500a8 8 0 0 1 16 0c0 4-3 8-8 14.500z"/><circle cx="371" cy="337.300" r="2.600" stroke-width="1.600"/><path d="M365.500 345l-9.500 12.500h30l-9.500-12.500"/>
<path d="M380.900 423.500V419a8.200 8.200 0 0 0-8.200-8.200h-10.100a8.200 8.200 0 0 0-8.200 8.200V437.500H366"/><path d="M369 426.200h-10.200v-1.500a5.500 5.500 0 0 1 5.500-5.500h6a6 6 0 0 1 6 4.600"/><path d="M364.500 415.800h5.800M358.300 433.200h6.200"/><path d="M356.400 438a3.600 3.600 0 0 0 7.200 0"/><circle cx="378.700" cy="435.600" r="8.600"/><path d="M374.400 436.300l3.100 2.600 5.800-5"/></g></svg>
<div class="abs" style="left:1380px;top:85px;width:224px;height:773px;background:#454a52"></div>
<div class="abs" id="tbl" style="left:1383px;top:88px;width:206px;height:339px;overflow:hidden;background:#454a52">
<div class="th" style="left:0;width:45px">编号</div><div class="th" style="left:45px;width:161px;border-left:1px solid #2f5f86">经纬度值</div>
<div class="tr" style="top:24px"><span class="c1"><i>98</i></span><span class="c2">121.433002,31.194208</span></div>
<div class="tr" style="top:49px"><span class="c1"><i>99</i></span><span class="c2">121.432537,31.194817</span></div>
<div class="tr" style="top:74px"><span class="c1"><i>100</i></span><span class="c2">121.431731,31.195996</span></div>
<div class="tr" style="top:99px"><span class="c1"><i>101</i></span><span class="c2">121.431341,31.196584</span></div>
<div class="tr" style="top:124px"><span class="c1"><i>102</i></span><span class="c2">121.431069,31.196997</span></div>
<div class="tr" style="top:149px"><span class="c1"><i>103</i></span><span class="c2">121.430989,31.197107</span></div>
<div class="tr" style="top:174px"><span class="c1"><i>104</i></span><span class="c2">121.430647,31.197592</span></div>
<div class="tr" style="top:199px"><span class="c1"><i>105</i></span><span class="c2">121.430534,31.197753</span></div>
<div class="tr" style="top:224px"><span class="c1"><i>106</i></span><span class="c2">121.430499,31.197806</span></div>
<div class="tr" style="top:249px"><span class="c1"><i>107</i></span><span class="c2">121.430242,31.198146</span></div>
<div class="tr" style="top:274px"><span class="c1"><i>108</i></span><span class="c2">121.430013,31.198476</span></div>
<div class="tr sel" style="top:299px"><span class="c1"><i>109</i></span><span class="c2">121.429581,31.199063</span></div>
<div class="tr" style="top:324px"><span class="c1"><i>110</i></span><span class="c2">121.429379,31.199356</span></div>
</div>
<div class="abs" style="left:1589px;top:88px;width:13px;height:339px;background:#41464e;border-left:1px solid #3a3f47"></div>
<div class="abs" style="left:1590px;top:297px;width:11px;height:49px;border-radius:5px;background:#353a42"></div>
<div class="abs" style="left:1492px;top:427px;width:110px;height:26px;background:#41464e"></div>
<div class="abs tabt" style="left:1383px;top:429px;width:109px;color:#fff">原始数据</div>
<div class="abs tabt" style="left:1492px;top:429px;width:110px;color:#4f545c">筛选数据</div>
<div class="abs" style="left:1383px;top:451px;width:109px;height:2px;background:#3aa5e2"></div>
<div class="abs" id="info" style="left:1383px;top:459px;width:219px;height:30px">角度 325°/第 108 个/共 146 个</div>
<div class="abs" style="left:1383px;top:495px;width:219px;height:360px;border:1px solid #3a3f47;border-radius:4px"></div>
<div class="abs" style="left:1389.5px;top:505.5px;width:12px;height:12px;border:1.500px solid #d0d0d0;border-radius:2px"></div>
<div class="abs fl" style="left:1408px;top:501px">地图选点</div>
<svg class="abs" style="left:1462px;top:503px" width="90" height="17" viewBox="1772 644 90 17"><circle cx="1780.300" cy="652.300" r="5.800" fill="none" stroke="#d6d6d6" stroke-width="1.700"/><circle cx="1780.300" cy="652.300" r="2.500" fill="#e6e6e6"/><circle cx="1849.200" cy="652.300" r="5.800" fill="none" stroke="#d6d6d6" stroke-width="1.700"/></svg>
<div class="abs fl" style="left:1484px;top:501px">起点</div>
<div class="abs fl" style="left:1553px;top:501px">终点</div>
<div class="abs fl" style="left:1389px;top:529.9px">起点地址</div>
<div class="abs inp" style="left:1443px;top:527.4px;padding-left:5px">121.425740,31.176567</div>
<div class="abs fl" style="left:1389px;top:561.9px">终点地址</div>
<div class="abs inp" style="left:1443px;top:559.4px;padding-left:5px">121.428545,31.203614</div>
<div class="abs fl" style="left:1389px;top:593.9px">路线方式</div>
<div class="abs inp" style="left:1443px;top:591.4px;padding-left:2px">步行<i></i></div>
<div class="abs fl" style="left:1389px;top:625.9px">路线方案</div>
<div class="abs inp" style="left:1443px;top:623.4px;padding-left:2px">最少时间<i></i></div>
<div class="abs fl" style="left:1389px;top:657.9px">目标点数</div>
<div class="abs inp" style="left:1443px;top:655.4px;padding-left:5px">30</div>
<div class="abs fl" style="left:1389px;top:689.9px">设备名称</div>
<div class="abs inp" style="left:1443px;top:687.4px;padding-left:5px">马航MH370</div>
<div class="abs fl" style="left:1389px;top:721.9px">移动间隔</div>
<div class="abs inp" style="left:1443px;top:719.4px;padding-left:2px">0.10秒<i></i></div>
<div class="abs fl" style="left:1389px;top:753.9px">轨迹模式</div>
<div class="abs inp" style="left:1443px;top:751.4px;padding-left:2px">重新绘制<i></i></div>
<div class="abs btn" style="left:1389px;top:783px">查询路线</div>
<div class="abs btn" style="left:1495px;top:783px">停止模拟</div>
<div class="abs btn" style="left:1389px;top:819px">筛选数据</div>
<div class="abs btn" style="left:1495px;top:819px">绘制路线</div>
<div class="abs" id="web" style="left:127px;top:86px;width:1249px;height:770px">
<svg class="abs" id="map" style="left:1px;top:1px" width="1236" height="518" viewBox="438 228 1236 518">
<rect x="438" y="228" width="1236" height="518" fill="#f4f3ef"/>
<defs><pattern id="gp" width="46" height="38" patternUnits="userSpaceOnUse" patternTransform="rotate(-24)"><g fill="none" stroke="#fff" stroke-width=".9" stroke-opacity=".5"><path d="M0 6h46M0 25h30M12 6v19M30 0v38M38 14h8M38 14v16h-8M4 31h14v7M20 11h6v8h-6zM0 16h8"/></g></pattern><pattern id="gp2" width="30" height="24" patternUnits="userSpaceOnUse" patternTransform="rotate(-14)"><g fill="none" stroke="#fff" stroke-width="1" stroke-opacity=".7"><path d="M0 5h30M0 17h30M9 0v24M22 5v12"/><rect x="12" y="8" width="7" height="6" rx="2"/></g></pattern></defs>
<path d="M534 228L556 228L575 270L545 288L500 310L470 300L470 267L496 255L514 243Z" fill="#e6ebf3"/>
<path d="M608 368L688 367L693 388L660 405L633 418L623 403Z" fill="#e6ebf3"/>
<path d="M640 420L700 400L712 440L650 455Z" fill="#e6ebf3"/>
<path d="M590 400L620 392L632 428L605 440Z" fill="#e6ebf3"/>
<path d="M565 455L600 440L612 470L575 488Z" fill="#e6ebf3"/>
<path d="M630 300L665 292L672 330L640 338Z" fill="#e6ebf3"/>
<path d="M585 250L610 245L615 275L590 280Z" fill="#e6ebf3"/>
<path d="M438 360L480 345L490 372L438 388Z" fill="#e6ebf3"/>
<path d="M455 425L500 410L515 440L470 460Z" fill="#e6ebf3"/>
<path d="M478 445L520 430L530 470L490 486Z" fill="#e6ebf3"/>
<path d="M715 300L750 300L755 345L720 350Z" fill="#e6ebf3"/>
<path d="M860.5 338L908 338L908 368L860.5 368Z" fill="#e6ebf3"/>
<path d="M938 310L956 310L956 363L938 363Z" fill="#e6ebf3"/>
<path d="M910 240L928 240L928 270L910 270Z" fill="#e6ebf3"/>
<path d="M830 388L853 388L853 403L830 403Z" fill="#e6ebf3"/>
<path d="M860 373L878 373L878 453L860 453Z" fill="#e6ebf3"/>
<path d="M752 278L780 278L780 310L752 310Z" fill="#e6ebf3"/>
<path d="M830 283L850 283L850 300L830 300Z" fill="#e6ebf3"/>
<path d="M1013 335L1043 335L1043 358L1013 358Z" fill="#e6ebf3"/>
<path d="M1000 300L1030 296L1036 330L1003 340Z" fill="#e6ebf3"/>
<path d="M1040 455L1066 448L1070 480L1045 486Z" fill="#e6ebf3"/>
<path d="M1080 290L1100 285L1110 300L1090 318Z" fill="#e6ebf3"/>
<path d="M1180 350L1206 348L1206 395L1188 390Z" fill="#e6ebf3"/>
<path d="M1368 268L1400 262L1400 335L1368 340Z" fill="#e6ebf3"/>
<path d="M1558 273L1608 265L1608 328L1565 335Z" fill="#e6ebf3"/>
<path d="M1505 373L1558 373L1558 423L1512 423Z" fill="#e6ebf3"/>
<path d="M1368 435L1430 430L1430 465L1380 470Z" fill="#e6ebf3"/>
<path d="M1493 443L1543 440L1543 466L1500 470Z" fill="#e6ebf3"/>
<path d="M1613 270L1640 268L1640 290L1613 292Z" fill="#e6ebf3"/>
<path d="M1640 345L1670 340L1670 362L1645 365Z" fill="#e6ebf3"/>
<path d="M1330 420L1365 410L1370 440L1340 450Z" fill="#e6ebf3"/>
<path d="M545 501L600 496L613 540L590 556L560 530Z" fill="#e6ebf3"/>
<path d="M688 528L745 525L745 561L690 561Z" fill="#e6ebf3"/>
<path d="M623 576L655 573L655 598L623 598Z" fill="#e6ebf3"/>
<path d="M590 616L645 616L645 648L590 648Z" fill="#e6ebf3"/>
<path d="M618 648L663 641L663 686L640 690L618 676Z" fill="#e6ebf3"/>
<path d="M468 693L488 693L488 716L468 716Z" fill="#e6ebf3"/>
<path d="M558 678L575 678L575 698L558 698Z" fill="#e6ebf3"/>
<path d="M625 703L645 703L645 726L625 726Z" fill="#e6ebf3"/>
<path d="M438 548L455 548L455 580L438 580Z" fill="#e6ebf3"/>
<path d="M795 553L840 545L846 568L798 575Z" fill="#e6ebf3"/>
<path d="M820 621L855 617L855 646L820 646Z" fill="#e6ebf3"/>
<path d="M873 611L893 611L893 623L873 623Z" fill="#e6ebf3"/>
<path d="M918 581L938 581L938 596L918 596Z" fill="#e6ebf3"/>
<path d="M960 523L988 523L988 536L960 536Z" fill="#e6ebf3"/>
<path d="M908 658L960 655L960 676L908 676Z" fill="#e6ebf3"/>
<path d="M983 706L1003 706L1003 745L983 745Z" fill="#e6ebf3"/>
<path d="M1023 656L1048 656L1048 681L1023 681Z" fill="#e6ebf3"/>
<path d="M1000 606L1020 606L1020 621L1000 621Z" fill="#e6ebf3"/>
<path d="M770 660L785 660L785 690L770 690Z" fill="#e6ebf3"/>
<path d="M1140 543L1175 541L1178 575L1165 586L1143 584Z" fill="#e6ebf3"/>
<path d="M1103 603L1140 600L1140 628L1103 628Z" fill="#e6ebf3"/>
<path d="M1233 628L1303 628L1303 646L1233 646Z" fill="#e6ebf3"/>
<path d="M1258 691L1288 691L1288 723L1258 723Z" fill="#e6ebf3"/>
<path d="M1328 568L1358 562L1358 611L1328 611Z" fill="#e6ebf3"/>
<path d="M1058 506L1073 506L1073 518L1058 518Z" fill="#e6ebf3"/>
<path d="M1068 691L1108 691L1108 703L1068 703Z" fill="#e6ebf3"/>
<path d="M1080 718L1108 718L1108 736L1080 736Z" fill="#e6ebf3"/>
<path d="M1196 513L1225 513L1225 530L1196 530Z" fill="#e6ebf3"/>
<path d="M1393 511L1443 511L1443 551L1398 551Z" fill="#e6ebf3"/>
<path d="M1463 536L1508 530L1512 596L1468 600Z" fill="#e6ebf3"/>
<path d="M1543 596L1593 593L1593 691L1555 691L1543 640Z" fill="#e6ebf3"/>
<path d="M1523 506L1563 501L1568 531L1530 538Z" fill="#e6ebf3"/>
<path d="M1568 511L1613 506L1613 546L1575 551Z" fill="#e6ebf3"/>
<path d="M1483 606L1508 606L1508 626L1483 626Z" fill="#e6ebf3"/>
<path d="M1420 700L1470 700L1470 735L1420 735Z" fill="#e6ebf3"/>
<path d="M1465.5 238L1485.5 235.5L1500.5 285.5L1478 286.7L1463 253Z" fill="#fbd8d8"/>
<path d="M1083 255L1100 248L1110 265L1092 275Z" fill="#fbdede"/>
<path d="M1480.5 523.5L1508 508.5L1515.5 518.5L1490.5 536Z" fill="#e8d6f6"/>
<path d="M438 228H534C528 236 520 240 513 243C508 250 500 254 495 255.500C486 262 478 265 470 266.700C458 266 448 264 438 263Z" fill="#b3e9d4"/>
<path d="M438 236C452 238 462 244 470 252C478 258 486 262 495 256M452 238C456 232 462 230 470 228M470 252C474 246 480 240 492 236C500 234 508 232 514 228" fill="none" stroke="#fff" stroke-opacity=".6" stroke-width="2"/>
<path d="M768 228L830.5 228L818 255.5L800 252L785.5 248L768 238Z" fill="#a6e3c8"/>
<path d="M768 228L830.5 228L818 255.5L800 252L785.5 248L768 238Z" fill="url(#gp)"/>
<path d="M1142 228L1334.5 228L1343.8 246.6L1350.8 267.6L1329.8 288.6L1299.5 316.6L1311 344.6L1315.8 372.5L1314.6 391.2L1313.5 412L1281 428.5L1271.5 438L1271.5 452L1255 459L1241.2 461L1222.6 451.8L1212 437.8L1214.4 414.5L1213.2 400.5L1207.4 377.2L1207.4 344.6L1170 342.2L1141 326L1128.2 305L1125.8 279.3L1129.3 251.3Z" fill="#a6e3c8" stroke="#a6e3c8" stroke-width="3" stroke-linejoin="round"/>
<path d="M1142 228L1334.5 228L1343.8 246.6L1350.8 267.6L1329.8 288.6L1299.5 316.6L1311 344.6L1315.8 372.5L1314.6 391.2L1313.5 412L1281 428.5L1271.5 438L1271.5 452L1255 459L1241.2 461L1222.6 451.8L1212 437.8L1214.4 414.5L1213.2 400.5L1207.4 377.2L1207.4 344.6L1170 342.2L1141 326L1128.2 305L1125.8 279.3L1129.3 251.3Z" fill="url(#gp)"/>
<path d="M1209.700 351.500H1225V379.500H1209.700Z" fill="#eef1f6"/>
<path d="M930.5 498.5L1018 501L1053 521L955.5 517L930.5 511Z" fill="#a6e3c8"/>
<path d="M1230.5 656L1240.5 654.7L1244 693.5L1225.5 696Z" fill="#a6e3c8"/>
<path d="M1368 588.5L1398 583.5L1418 591L1433 573.5L1435.5 563.5L1453 563.5L1463 606L1443 616L1445.5 648.5L1418 656L1400.5 636L1383 611Z" fill="#aee2c8"/>
<path d="M1368 588.5L1398 583.5L1418 591L1433 573.5L1435.5 563.5L1453 563.5L1463 606L1443 616L1445.5 648.5L1418 656L1400.5 636L1383 611Z" fill="url(#gp2)"/>
<path d="M1368 586L1378 586L1378 598.5L1368 598.5Z" fill="#a6e3c8"/>
<path d="M1655.5 486C1652.6 490.2 1644.2 499.3 1638 511C1631.8 522.7 1623.4 543.5 1618 556C1612.6 568.5 1608 574.8 1605.5 586C1603 597.2 1602.6 611 1603 623.5C1603.4 636 1605.5 648.5 1608 661C1610.5 673.5 1613.8 684.3 1618 698.5C1622.2 712.7 1630.5 738.1 1633 746L1674 746L1674 486Z" fill="#9ecdfc"/>
<path d="M1674 540C1668 552 1662 562 1663 573.500C1663 588 1665 600 1674 628Z" fill="#c6ecd6"/>
<path d="M1660.500 488L1674 468V488Z" fill="#9ecdfc"/><path d="M1653 463L1663 463L1663 481L1653 481Z" fill="#b4e6c8"/>
<path d="M1603 583.5C1597.2 583.9 1580.1 583.9 1568 586C1555.9 588.1 1540.5 592.2 1530.5 596C1520.5 599.8 1514.2 602.7 1508 608.5C1501.8 614.3 1496.8 622.2 1493 631C1489.2 639.8 1488 652.7 1485.5 661C1483 669.3 1483 673.9 1478 681C1473 688.1 1465.5 696.8 1455.5 703.5C1445.5 710.2 1430.1 716.4 1418 721C1405.9 725.6 1390.1 726.8 1383 731C1375.9 735.2 1376.8 743.5 1375.5 746" fill="none" stroke="#a8cef6" stroke-width="5" stroke-linecap="round"/>
<path d="M1067.7 524.7C1056.1 524.1 1016.7 522.3 998 521C979.3 519.7 971.3 517.7 955.5 517C939.7 516.3 920.9 514.2 903 517C885.1 519.8 867.6 527 848 533.5C828.4 540 801.5 550.2 785.5 556C769.5 561.8 764.1 563.5 752 568.5C739.9 573.5 727.8 581.8 713 586C698.2 590.2 675.5 591.8 663 593.5C650.5 595.2 646.3 593.9 638 596C629.7 598.1 623 602.2 613 606C603 609.8 590.5 614.3 578 618.5C565.5 622.7 553 626.4 538 631C523 635.6 500.5 641.4 488 646C475.5 650.6 469.2 655.2 463 658.5C456.8 661.8 452.6 664.8 450.5 666" fill="none" stroke="#9fc8f5" stroke-width="3" stroke-linecap="round"/>
<path d="M438 636C439.2 641 442.2 655.6 445.5 666C448.8 676.4 453.4 688.5 458 698.5C462.6 708.5 468.8 718.1 473 726C477.2 733.9 481.3 742.7 483 746" fill="none" stroke="#9fc6f4" stroke-width="3.5" stroke-linecap="round"/>
<path d="M1058 523.5C1062.2 524.3 1074.7 524.3 1083 528.5C1091.3 532.7 1099.7 538.9 1108 548.5C1116.3 558.1 1125.5 574.8 1133 586C1140.5 597.2 1148 603.5 1153 616C1158 628.5 1160.9 645.2 1163 661C1165.1 676.8 1165.5 696.8 1165.5 711C1165.5 725.2 1163.4 740.2 1163 746" fill="none" stroke="#b9d7f8" stroke-width="3.5" stroke-linecap="round"/>
<g fill="none" stroke="#fff" stroke-linecap="round" stroke-linejoin="round">
<path d="M438 263C442.2 265.5 454.7 270.1 463 278C471.3 285.9 478.4 295.5 488 310.5C497.6 325.5 511.3 351.8 520.5 368C529.7 384.2 534.7 394.7 543 408C551.3 421.3 562.2 434.7 570.5 448C578.8 461.3 589.2 481.3 593 488" stroke-width="3.0"/>
<path d="M438 435.5C446.7 433.4 472.5 427.8 490 423C507.5 418.2 524.6 414.2 543 406.7C561.4 399.2 590.9 382.8 600.5 378" stroke-width="3.0"/>
<path d="M438 463C450.5 455.5 489.7 430.1 513 418C536.3 405.9 567.2 395.1 578 390.5" stroke-width="2.4"/>
<path d="M600.5 364C613.8 363.8 653.8 363 680 363C706.2 363 734.4 363.8 757.7 364C781 364.2 809.6 364 820 364" stroke-width="3.6"/>
<path d="M630.5 418C640.1 414.7 673.1 402.3 688 398C702.9 393.7 708.8 390.8 720 392C731.2 393.2 749.2 402.8 755 405" stroke-width="3.0"/>
<path d="M638 445.5C649.7 442.2 689.2 430.9 708 425.5C726.8 420.1 743.4 415.1 750.5 413" stroke-width="3.0"/>
<path d="M633 228C635.1 240.5 641.3 280.9 645.5 303C649.7 325.1 655.9 350.9 658 360.5" stroke-width="2.4"/>
<path d="M683 333C684.2 338.8 686.7 353.8 690 368C693.3 382.2 697.1 398 703 418C708.9 438 721.8 476.3 725.5 488" stroke-width="2.4"/>
<path d="M610.5 340C610.8 337.5 608.8 328.7 612 325C615.2 321.3 618.2 318.8 630 318C641.8 317.2 670.3 320 683 320C695.7 320 702.2 318.3 706 318" stroke-width="3.0"/>
<path d="M610.5 340C612.1 341.3 611.8 347.7 620 348C628.2 348.3 645.7 345 660 342C674.3 339 698.3 332 706 330" stroke-width="3.0"/>
<path d="M438 300C443.3 301.7 461.7 308.2 470 310C478.3 311.8 485 310.4 488 310.5" stroke-width="2.4"/>
<path d="M520 368C511.7 372.5 483.7 387.7 470 395C456.3 402.3 443.3 409.2 438 412" stroke-width="2.4"/>
<path d="M543 408C535.8 411.7 513.8 422.2 500 430C486.2 437.8 470.3 448.3 460 455C449.7 461.7 441.7 467.5 438 470" stroke-width="2.4"/>
<path d="M560 245C562.5 244.2 573 239.2 575 240C577 240.8 572.5 248.3 572 250" stroke-width="2.4"/>
<path d="M655 455C652.5 457.5 640.8 464.5 640 470C639.2 475.5 648.3 485 650 488" stroke-width="2.4"/>
<path d="M748 278C755 278.3 770.4 278 790 280C809.6 282 852.9 288.3 865.5 290" stroke-width="3.0"/>
<path d="M748 310.5C755 310.9 776.3 311.8 790 313C803.7 314.2 823.3 317.2 830 318" stroke-width="3.0"/>
<path d="M748 345.5C756.3 345.9 779.3 347.2 798 348C816.7 348.8 849.7 349.7 860 350" stroke-width="3.0"/>
<path d="M790.5 409C802.1 409.2 839.6 409.6 860 410C880.4 410.4 896.3 411.4 913 411.7C929.7 412 952.2 411.9 960 412" stroke-width="3.0"/>
<path d="M858 370.5 L943 373" stroke-width="4.2"/>
<path d="M788 255C788 260.1 788 260 788 285.5C788 311 788 387.6 788 408" stroke-width="3.0"/>
<path d="M808 293C806.7 300.8 802.9 327.5 800 340C797.1 352.5 792.1 363.3 790.5 368" stroke-width="2.4"/>
<path d="M858 290C858 298.4 858 313.3 858 340.5C858 367.7 858 434.2 858 453" stroke-width="3.0"/>
<path d="M920.5 288C920.5 301.3 920.1 344.7 920.5 368C920.9 391.3 922.6 418 923 428" stroke-width="3.0"/>
<path d="M975.5 375.5 L975.5 418" stroke-width="2.4"/>
<path d="M830 255C831 260.8 836 279.5 836 290C836 300.5 831 313.3 830 318" stroke-width="2.4"/>
<path d="M898 235C896.7 238.8 893.3 249.8 890 258C886.7 266.2 880 279.7 878 284" stroke-width="2.4"/>
<path d="M760 250C758.7 254.7 754 268 752 278C750 288 748.7 304.7 748 310" stroke-width="2.4"/>
<path d="M760 345 L757 365" stroke-width="2.4"/>
<path d="M1003 238C1000 239.2 988.3 241 985 245C981.7 249 983.3 259.2 983 262" stroke-width="2.4"/>
<path d="M1020 345C1022.5 343.8 1030.8 335.5 1035 338C1039.2 340.5 1043.3 356.3 1045 360" stroke-width="2.4"/>
<path d="M1030 435C1032.5 433.3 1040.8 424.2 1045 425C1049.2 425.8 1053.3 437.5 1055 440" stroke-width="2.4"/>
<path d="M880 470 L883 488" stroke-width="2.4"/>
<path d="M1298 313C1301.8 319.7 1317.6 340.5 1320.5 353C1323.4 365.5 1317.2 375.5 1315.5 388C1313.8 400.5 1307.6 413 1310.5 428C1313.4 443 1329.2 469.7 1333 478" stroke-width="3.0"/>
<path d="M1318 350.5C1328 345.5 1361 328.9 1377.7 320.5C1394.4 312.1 1411.3 303.4 1418 300" stroke-width="3.0"/>
<path d="M1315.5 388C1325.9 384.7 1360.6 375.9 1377.7 368C1394.8 360.1 1411.3 345.1 1418 340.5" stroke-width="3.0"/>
<path d="M1158 388C1166.3 390.1 1191 398.8 1208 400.5C1225 402.2 1242.5 399.7 1260 398C1277.5 396.3 1304.2 391.8 1313 390.5" stroke-width="3.6"/>
<path d="M1103 353C1108 356.3 1123.8 367.2 1133 373C1142.2 378.8 1153.8 385.5 1158 388" stroke-width="3.0"/>
<path d="M1058 400.5C1062.2 403.4 1070.9 411.3 1083 418C1095.1 424.7 1113.8 438.4 1130.5 440.5C1147.2 442.6 1169.2 431.9 1183 430.5C1196.8 429.1 1208 431.8 1213 432" stroke-width="3.0"/>
<path d="M1203 400.5C1199.7 406.3 1187.2 422.6 1183 435.5C1178.8 448.4 1178.5 469.2 1178 478C1177.5 486.8 1179.7 486.3 1180 488" stroke-width="3.0"/>
<path d="M1150.5 338C1147.6 343.8 1138.1 362.2 1133 373C1127.9 383.8 1124.2 394.3 1120 403C1115.8 411.7 1110 421.3 1108 425" stroke-width="2.4"/>
<path d="M1073 380C1075.8 382.5 1088.3 388.7 1090 395C1091.7 401.3 1084.2 414.2 1083 418" stroke-width="2.4"/>
<path d="M1310 428C1315.8 426.7 1333.7 423.3 1345 420C1356.3 416.7 1372.2 410 1377.7 408" stroke-width="2.4"/>
<path d="M1270 458C1275 458.7 1290.8 462.5 1300 462C1309.2 461.5 1320.8 456.2 1325 455" stroke-width="2.4"/>
<path d="M1130 440C1131.7 444.2 1136.7 457 1140 465C1143.3 473 1148.3 484.2 1150 488" stroke-width="2.4"/>
<path d="M1083 418C1080.8 421.7 1071.3 431.3 1070 440C1068.7 448.7 1074.2 465 1075 470" stroke-width="2.4"/>
<path d="M1345 235C1347.5 237.5 1354.5 246.2 1360 250C1365.5 253.8 1375 256.7 1378 258" stroke-width="2.4"/>
<path d="M1480.5 228C1485.1 238.4 1499.7 270.5 1508 290.5C1516.3 310.5 1522.2 331.8 1530.5 348C1538.8 364.2 1550.5 374.7 1558 388C1565.5 401.3 1569.7 417.2 1575.5 428C1581.3 438.8 1590.1 448.8 1593 453" stroke-width="3.0"/>
<path d="M1523 228C1527.2 236.3 1540.5 263.4 1548 278C1555.5 292.6 1562.2 303.8 1568 315.5C1573.8 327.2 1579.7 339.2 1583 348C1586.3 356.8 1583.8 360.9 1588 368C1592.2 375.1 1604.7 386.8 1608 390.5" stroke-width="3.0"/>
<path d="M1368 333C1376.3 330.1 1394.7 322.6 1418 315.5C1441.3 308.4 1487.2 296.8 1508 290.5C1528.8 284.2 1522.6 280.9 1543 278C1563.4 275.1 1610.5 275.5 1630.5 273C1650.5 270.5 1655.8 264.8 1663 263C1670.2 261.2 1672.2 262.2 1674 262" stroke-width="3.0"/>
<path d="M1368 363C1376.3 359.2 1401.3 349.2 1418 340.5C1434.7 331.8 1452.7 317.2 1468 310.5C1483.3 303.8 1503 301.8 1510 300" stroke-width="3.0"/>
<path d="M1393 348C1397.2 359.7 1409.7 394.7 1418 418C1426.3 441.3 1438.8 476.3 1443 488" stroke-width="3.0"/>
<path d="M1368 295.5 L1393 348" stroke-width="2.4"/>
<path d="M1388 228C1389.2 230.8 1396.3 239.3 1395 245C1393.7 250.7 1382.5 259.2 1380 262" stroke-width="2.4"/>
<path d="M1500 258C1510 255.8 1540 248.8 1560 245C1580 241.2 1601 236.2 1620 235C1639 233.8 1665 237.5 1674 238" stroke-width="3.0"/>
<path d="M1583 348C1589.2 345.8 1604.8 340 1620 335C1635.2 330 1665 320.8 1674 318" stroke-width="3.0"/>
<path d="M1558 388 L1600 375" stroke-width="2.4"/>
<path d="M1440 355C1441.7 360 1445 374.2 1450 385C1455 395.8 1463.3 405.8 1470 420C1476.7 434.2 1486.7 461.7 1490 470" stroke-width="2.4"/>
<path d="M1418 418C1426.7 415 1456.3 404.3 1470 400C1483.7 395.7 1495 393.3 1500 392" stroke-width="2.4"/>
<path d="M1620 235C1622.5 241.7 1630 264.2 1635 275C1640 285.8 1647.5 295.8 1650 300" stroke-width="2.4"/>
<path d="M1575 428C1580.8 428.3 1599.2 427.2 1610 430C1620.8 432.8 1631.7 438.3 1640 445C1648.3 451.7 1656.7 465.8 1660 470" stroke-width="2.4"/>
<path d="M1420 345C1421.3 350 1428 369.5 1428 375C1428 380.5 1421.3 377.5 1420 378" stroke-width="2.4"/>
<path d="M1593 453C1594.2 455.8 1598 464.2 1600 470C1602 475.8 1604.2 485 1605 488" stroke-width="2.4"/>
<path d="M438 706C451.7 701.3 495 686.8 520 678C545 669.2 564.2 660.5 588 653.5C611.8 646.5 634.7 643.9 663 636C691.3 628.1 741.9 611 757.7 606" stroke-width="3.6"/>
<path d="M463 601C473.4 593.5 508.8 567.2 525.5 556C542.2 544.8 550.6 539 563 533.5C575.4 528 585.8 525.9 600 523C614.2 520.1 640 517.2 648 516" stroke-width="3.6"/>
<path d="M438 508C446.3 506.3 467.2 501.7 488 498C508.8 494.3 550.5 488 563 486" stroke-width="2.4"/>
<path d="M553 543.5C557.2 552.2 571.3 576.4 578 596C584.7 615.6 587.2 636 593 661C598.8 686 609.7 731.8 613 746" stroke-width="3.0"/>
<path d="M528 568.5C529.7 578.1 533.8 602.2 538 626C542.2 649.8 549.7 691 553 711C556.3 731 557.2 740.2 558 746" stroke-width="3.0"/>
<path d="M453 536C454.7 546.8 460.1 583.5 463 601C465.9 618.5 464.2 616.8 470.5 641C476.8 665.2 495.5 728.5 500.5 746" stroke-width="3.0"/>
<path d="M598 486C603 494.3 618 519.3 628 536C638 552.7 650.5 565.2 658 586C665.5 606.8 668 642.2 673 661C678 679.8 683.4 684.3 688 698.5C692.6 712.7 698.4 738.1 700.5 746" stroke-width="3.0"/>
<path d="M688 536C690.1 544.3 696.3 568.5 700.5 586C704.7 603.5 706.8 620.2 713 641C719.2 661.8 732.2 693.5 738 711C743.8 728.5 746.3 740.2 748 746" stroke-width="3.0"/>
<path d="M688 616 L757.7 593.5" stroke-width="3.0"/>
<path d="M713 641 L757.7 631" stroke-width="2.4"/>
<path d="M725.5 681 L757.7 673.5" stroke-width="2.4"/>
<path d="M438 676 L488 661" stroke-width="2.4"/>
<path d="M470 500C473 505 483 520 488 530C493 540 498 555 500 560" stroke-width="2.4"/>
<path d="M438 538C443.3 536.3 459.7 531.8 470 528C480.3 524.2 495 517.2 500 515" stroke-width="2.4"/>
<path d="M438 590 L463 580" stroke-width="2.4"/>
<path d="M608 706 L630 701" stroke-width="2.4"/>
<path d="M438 730 L470 722" stroke-width="2.4"/>
<path d="M848 558.5C857.2 555.8 878 544.8 903 542C928 539.2 973.8 540.9 998 542C1022.2 543.1 1036.3 545.3 1048 548.5C1059.7 551.7 1064.7 558.9 1068 561" stroke-width="3.6"/>
<path d="M748 591C756.7 588.3 783.3 580.4 800 575C816.7 569.6 840 561.2 848 558.5" stroke-width="3.0"/>
<path d="M805.5 498.5C809.6 503.8 822.9 519.6 830 530C837.1 540.4 842.9 543.3 848 561C853.1 578.7 856.3 615.2 860.5 636C864.7 656.8 868.4 667.7 873 686C877.6 704.3 885.5 736 888 746" stroke-width="3.0"/>
<path d="M875.5 553.5C879.2 565.6 890.9 601.4 898 626C905.1 650.6 913 681 918 701C923 721 926.3 738.5 928 746" stroke-width="3.0"/>
<path d="M748 636C765.9 632.7 823 622.7 855.5 616C888 609.3 928.4 599.3 943 596" stroke-width="3.0"/>
<path d="M748 731C768.8 726.8 831.3 710.6 873 706C914.7 701.4 965.5 706.8 998 703.5C1030.5 700.2 1056.1 688.9 1067.7 686" stroke-width="3.0"/>
<path d="M748 746C768.8 744.3 833.5 740.2 873 736C912.5 731.8 966.3 723.5 985 721" stroke-width="2.4"/>
<path d="M1018 576C1019.2 579.2 1022.9 588.3 1025 595C1027.1 601.7 1029.6 612.5 1030.5 616" stroke-width="2.4"/>
<path d="M750.5 591C750.8 602.5 750.8 634.2 752 660C753.2 685.8 757 731.7 758 746" stroke-width="2.4"/>
<path d="M775.5 598C775.9 608.3 775.6 635.3 778 660C780.4 684.7 788 731.7 790 746" stroke-width="2.4"/>
<path d="M798 591C799.2 602.5 801.3 634.2 805 660C808.7 685.8 817.5 731.7 820 746" stroke-width="2.4"/>
<path d="M830.5 676 L848 746" stroke-width="2.4"/>
<path d="M748 610 L798 604" stroke-width="2.4"/>
<path d="M748 662 L830 648" stroke-width="2.4"/>
<path d="M920 576 L948 570" stroke-width="2.4"/>
<path d="M1040 700 L1050 746" stroke-width="2.4"/>
<path d="M1120.5 603.5C1128.8 599.8 1155.5 587.2 1170.5 581C1185.5 574.8 1203.8 568.5 1210.5 566" stroke-width="3.6"/>
<path d="M1058 553.5C1064.2 557.1 1084.6 566.7 1095 575C1105.4 583.3 1112.9 591.7 1120.5 603.5C1128.1 615.3 1135.6 631.6 1140.5 646C1145.4 660.4 1147.1 673.3 1150 690C1152.9 706.7 1156.7 736.7 1158 746" stroke-width="3.0"/>
<path d="M1058 681C1071.8 675.2 1118.8 653.5 1140.5 646C1162.2 638.5 1174.2 637.7 1188 636C1201.8 634.3 1217.2 636 1223 636" stroke-width="3.0"/>
<path d="M1233 636C1241.3 636.4 1266.3 638.5 1283 638.5C1299.7 638.5 1317.2 634.8 1333 636C1348.8 637.2 1370.2 644.3 1377.7 646" stroke-width="3.0"/>
<path d="M1255.5 626C1255.9 636 1256.8 669.8 1258 686C1259.2 702.2 1262.2 717.2 1263 723.5" stroke-width="3.0"/>
<path d="M1223 698.5 L1295.5 688.5" stroke-width="3.0"/>
<path d="M1278 641C1281.3 648.5 1293.8 674.3 1298 686C1302.2 697.7 1302.2 706.8 1303 711" stroke-width="3.0"/>
<path d="M1158 486 L1198 531" stroke-width="3.0"/>
<path d="M1198 486 L1188 511" stroke-width="2.4"/>
<path d="M1058 626 L1083 636" stroke-width="2.4"/>
<path d="M1193 708.5 L1213 708.5" stroke-width="2.4"/>
<path d="M1333 636C1335 640 1342.2 651 1345 660C1347.8 669 1349.2 685 1350 690" stroke-width="2.4"/>
<path d="M1300 600C1303.3 602.5 1314.5 609 1320 615C1325.5 621 1330.8 632.5 1333 636" stroke-width="2.4"/>
<path d="M1058 720 L1100 716" stroke-width="2.4"/>
<path d="M1450.5 486C1456.8 495.2 1476.8 526.4 1488 541C1499.2 555.6 1511.3 557.7 1518 573.5C1524.7 589.3 1525.5 617.2 1528 636C1530.5 654.8 1531.3 667.7 1533 686C1534.7 704.3 1537.2 736 1538 746" stroke-width="3.0"/>
<path d="M1515.5 573.5C1524.2 563.1 1553.9 525.6 1568 511C1582.1 496.4 1594.7 490.2 1600 486" stroke-width="3.6"/>
<path d="M1493 491C1502.2 498.5 1532.2 524.8 1548 536C1563.8 547.2 1581.3 554.8 1588 558.5" stroke-width="3.0"/>
<path d="M1540.5 493.5C1548.8 497.9 1577.9 514.2 1590 520C1602.1 525.8 1609.2 527.1 1613 528.5" stroke-width="3.0"/>
<path d="M1413 551 L1455.5 538.5" stroke-width="3.0"/>
<path d="M1403 496 L1423 548.5" stroke-width="3.0"/>
<path d="M1528 598.5C1533.3 597.6 1550 594.2 1560 593C1570 591.8 1583.3 591.3 1588 591" stroke-width="3.0"/>
<path d="M1588 593.5C1588.8 604.8 1589.7 641.4 1593 661C1596.3 680.6 1602.7 696.8 1608 711C1613.3 725.2 1622.2 740.2 1625 746" stroke-width="3.0"/>
<path d="M1473 711C1484.7 709.3 1520.9 703.9 1543 701C1565.1 698.1 1595.1 694.8 1605.5 693.5" stroke-width="3.0"/>
<path d="M1445.5 671C1450.1 676.8 1466.8 693.5 1473 706C1479.2 718.5 1481.3 739.3 1483 746" stroke-width="3.0"/>
<path d="M1533 668.5 L1558 668.5" stroke-width="2.4"/>
<path d="M1368 648.5C1374.2 650.6 1402.2 654.8 1405.5 661C1408.8 667.2 1390.9 681.8 1388 686" stroke-width="2.4"/>
<path d="M1500 650 L1525 655" stroke-width="2.4"/>
<path d="M1568 511C1573.3 513.8 1592.5 525.1 1600 528C1607.5 530.9 1610.8 528.4 1613 528.5" stroke-width="2.4"/>
<path d="M1473 711C1469.2 715 1455.5 729.2 1450 735C1444.5 740.8 1441.7 744.2 1440 746" stroke-width="2.4"/>
<path d="M1400 746 L1420 735" stroke-width="2.4"/>
</g>
<path d="M1340.5 486C1343.4 498.5 1355.9 540.2 1358 561C1360.1 581.8 1353.7 594.3 1353 611C1352.3 627.7 1353.5 638.5 1354 661C1354.5 683.5 1355.7 731.8 1356 746" fill="none" stroke="#d4d7de" stroke-width="1.600" stroke-dasharray="3 2"/>
<path d="M1638 496C1633 506 1616.3 537.3 1608 556C1599.7 574.7 1591.3 599.3 1588 608" fill="none" stroke="#dcdfe5" stroke-width="3"/>
<g fill="none" stroke-linecap="butt" stroke-linejoin="round">
<path d="M438 338C442.2 335.1 454.7 326.3 463 320.5C471.3 314.7 479.7 308.4 488 303C496.3 297.6 502.6 293 513 288C523.4 283 538 277.6 550.5 273C563 268.4 577.6 264.7 588 260.5C598.4 256.3 604.7 251.8 613 248C621.3 244.2 630.5 241.3 638 238C645.5 234.7 654.7 229.7 658 228" stroke="#ffebb2" stroke-width="5" stroke-linecap="round"/>
<path d="M748 235.5C752.2 236.8 762.6 239.2 773 243C783.4 246.8 798 252.8 810.5 258C823 263.2 836.8 269.7 848 274C859.2 278.3 865.5 281.7 878 284C890.5 286.3 907.2 286.7 923 288C938.8 289.3 957.6 291.3 973 291.7C988.4 292.1 1005.1 292.2 1015.5 290.5C1025.9 288.8 1026.8 285.9 1035.5 281.7C1044.2 277.5 1057.7 271.1 1067.7 265.5C1077.7 259.9 1083.5 254.2 1095.5 248C1107.5 241.8 1132.6 231.3 1140 228" stroke="#ffebb2" stroke-width="5" stroke-linecap="round"/>
<path d="M1023 291.7C1026.7 292.6 1037.5 295.5 1045 297C1052.5 298.5 1064.2 299.9 1068 300.5" stroke="#ffebb2" stroke-width="8" stroke-linecap="round"/>
<path d="M1035 282C1037.5 283.7 1044.5 288.9 1050 292C1055.5 295.1 1065 299.1 1068 300.5" stroke="#ffebb2" stroke-width="4" stroke-linecap="round"/>
<path d="M720.5 353C722.6 357.2 728.4 369 733 378C737.6 387 743.2 398 748 407C752.8 416 757.7 424.4 762 432C766.3 439.6 769.8 446.2 774 452.5C778.2 458.8 783.7 464.1 787 470C790.3 475.9 792.8 485 794 488" stroke="#ffebb2" stroke-width="6" stroke-linecap="round"/>
<path d="M1067.7 378C1060.2 381.8 1038.8 393 1023 400.5C1007.2 408 989.7 415.9 973 423C956.3 430.1 939.7 437 923 443C906.3 449 891.8 453.8 873 459C854.2 464.2 828.8 469.2 810.5 474C792.2 478.8 771.8 484 763 487.7C754.2 491.4 766 490.4 757.7 496C749.4 501.6 728.8 512.7 713 521C697.2 529.3 679.7 537.2 663 546C646.3 554.8 627.2 565.2 613 573.5C598.8 581.8 590.5 590.6 578 596C565.5 601.4 553 601.8 538 606C523 610.2 504.7 616 488 621C471.3 626 446.3 633.5 438 636" stroke="#ffebb2" stroke-width="7.5" stroke-linecap="round"/>
<path d="M1058 388C1063.4 383.8 1082.2 370.1 1090.5 363C1098.8 355.9 1103.1 352.2 1108 345.5C1112.9 338.8 1118 326.8 1120 323" stroke="#ffebb2" stroke-width="7" stroke-linecap="round"/>
<path d="M1058 275.5C1061.3 273 1069.3 265.9 1078 260.5C1086.7 255.1 1099.6 248.4 1110 243C1120.4 237.6 1135.4 230.5 1140.5 228" stroke="#ffebb2" stroke-width="4" stroke-linecap="round"/>
<path d="M1328 228C1324.7 233.4 1315.5 248 1308 260.5C1300.5 273 1289.2 291.8 1283 303C1276.8 314.2 1272.6 323.8 1270.5 328" stroke="#ffebb2" stroke-width="6" stroke-linecap="round"/>
<path d="M1368 260.5C1374.2 257.6 1394.7 248 1405.5 243C1416.3 238 1427.2 233 1433 230.5C1438.8 228 1438.8 228.4 1440 228" stroke="#ffebb2" stroke-width="6" stroke-linecap="round"/>
<path d="M1523 478C1530.5 473.8 1552.2 461.3 1568 453C1583.8 444.7 1605.5 434.7 1618 428C1630.5 421.3 1633.8 418.4 1643 413C1652.2 407.6 1668.4 398.4 1673.5 395.5" stroke="#ffebb2" stroke-width="6" stroke-linecap="round"/>
<path d="M1253 568.5C1262.2 571.4 1294.7 581 1308 586C1321.3 591 1326.3 591.8 1333 598.5C1339.7 605.2 1344.7 615.6 1348 626C1351.3 636.4 1351.8 648.5 1353 661C1354.2 673.5 1354.2 686.8 1355.5 701C1356.8 715.2 1359.7 738.5 1360.5 746" stroke="#ffebb2" stroke-width="7" stroke-linecap="round"/>
<path d="M1058 746C1068.4 745.2 1099.7 743.1 1120.5 741C1141.3 738.9 1160.1 736 1183 733.5C1205.9 731 1237.2 729.8 1258 726C1278.8 722.2 1288 716.8 1308 711C1328 705.2 1363.5 694.8 1377.7 691C1391.9 687.2 1382.1 691.8 1393 688.5C1403.9 685.2 1430.5 675.8 1443 671C1455.5 666.2 1463.8 661.8 1468 660" stroke="#ffebb2" stroke-width="5.5" stroke-linecap="round"/>
<path d="M1505.5 486C1500.9 488.5 1485.6 494.8 1478 501C1470.4 507.2 1464.3 514.3 1460 523.5C1455.7 532.7 1452.5 545.6 1452 556C1451.5 566.4 1454.8 576 1457 586C1459.2 596 1463.5 605.3 1465 616C1466.5 626.7 1465.8 644.3 1466 650" stroke="#ffebb2" stroke-width="5" stroke-linecap="round"/>
<path d="M535.5 228C537.6 232.2 543.8 242.6 548 253C552.2 263.4 556.3 278.8 560.5 290.5C564.7 302.2 568.4 312.6 573 323C577.6 333.4 582.2 342.2 588 353C593.8 363.8 602.2 376.3 608 388C613.8 399.7 618.4 412.2 623 423C627.6 433.8 631.8 442.2 635.5 453C639.2 463.8 641.8 475.9 645.5 487.7C649.2 499.4 653.8 510 658 523.5C662.2 537 666.3 553.1 670.5 568.5C674.7 583.9 678.8 599.8 683 616C687.2 632.2 691.8 651 695.5 666C699.2 681 702.2 692.7 705.5 706C708.8 719.3 713.8 739.3 715.5 746" stroke="#ffe9a8" stroke-width="12"/>
<path d="M535.5 228C537.6 232.2 543.8 242.6 548 253C552.2 263.4 556.3 278.8 560.5 290.5C564.7 302.2 568.4 312.6 573 323C577.6 333.4 582.2 342.2 588 353C593.8 363.8 602.2 376.3 608 388C613.8 399.7 618.4 412.2 623 423C627.6 433.8 631.8 442.2 635.5 453C639.2 463.8 641.8 475.9 645.5 487.7C649.2 499.4 653.8 510 658 523.5C662.2 537 666.3 553.1 670.5 568.5C674.7 583.9 678.8 599.8 683 616C687.2 632.2 691.8 651 695.5 666C699.2 681 702.2 692.7 705.5 706C708.8 719.3 713.8 739.3 715.5 746" stroke="#fbd766" stroke-width="6"/>
<path d="M758 229C750.5 229.7 724.7 230.7 713 233C701.3 235.3 696.3 238.8 688 243C679.7 247.2 675.5 249.2 663 258C650.5 266.8 628 284.5 613 295.5C598 306.5 585.5 315.2 573 324C560.5 332.8 552.2 339.4 538 348C523.8 356.6 502.2 368.4 488 375.5C473.8 382.6 461.3 387.4 453 390.5C444.7 393.6 440.5 393.4 438 394" stroke="#ffe6a0" stroke-width="9"/>
<path d="M758 229C750.5 229.7 724.7 230.7 713 233C701.3 235.3 696.3 238.8 688 243C679.7 247.2 675.5 249.2 663 258C650.5 266.8 628 284.5 613 295.5C598 306.5 585.5 315.2 573 324C560.5 332.8 552.2 339.4 538 348C523.8 356.6 502.2 368.4 488 375.5C473.8 382.6 461.3 387.4 453 390.5C444.7 393.6 440.5 393.4 438 394" stroke="#fcd768" stroke-width="6.5"/>
<path d="M920.5 228C923.4 232.6 931.3 245.5 938 255.5C944.7 265.5 953.4 276.8 960.5 288C967.6 299.2 973.8 310.5 980.5 323C987.2 335.5 993.4 350.1 1000.5 363C1007.6 375.9 1015.1 388.4 1023 400.5C1030.9 412.6 1040.5 424.2 1048 435.5C1055.5 446.8 1062.7 459.6 1067.7 468C1072.7 476.4 1073.4 480.5 1078 486C1082.6 491.5 1088.4 496.4 1095.5 501C1102.6 505.6 1110.1 509.8 1120.5 513.5C1130.9 517.2 1146.8 520.2 1158 523.5C1169.2 526.8 1178.8 529.8 1188 533.5C1197.2 537.2 1203 540.6 1213 546C1223 551.4 1236.3 561 1248 566C1259.7 571 1273 574.3 1283 576C1293 577.7 1299.7 579.3 1308 576C1316.3 572.7 1324.7 563.5 1333 556C1341.3 548.5 1349.7 539.3 1358 531C1366.3 522.7 1375.1 513.2 1383 506C1390.9 498.8 1397.6 494.4 1405.5 487.7C1413.4 480.9 1420.1 472.1 1430.5 465.5C1440.9 458.9 1453.4 452.6 1468 448C1482.6 443.4 1503.4 442.6 1518 438C1532.6 433.4 1543 428 1555.5 420.5C1568 413 1582.6 401.3 1593 393C1603.4 384.7 1609.7 377.6 1618 370.5C1626.3 363.4 1633.8 356.8 1643 350.5C1652.2 344.2 1668.4 335.9 1673.5 333" stroke="#ffe6a0" stroke-width="8"/>
<path d="M920.5 228C923.4 232.6 931.3 245.5 938 255.5C944.7 265.5 953.4 276.8 960.5 288C967.6 299.2 973.8 310.5 980.5 323C987.2 335.5 993.4 350.1 1000.5 363C1007.6 375.9 1015.1 388.4 1023 400.5C1030.9 412.6 1040.5 424.2 1048 435.5C1055.5 446.8 1062.7 459.6 1067.7 468C1072.7 476.4 1073.4 480.5 1078 486C1082.6 491.5 1088.4 496.4 1095.5 501C1102.6 505.6 1110.1 509.8 1120.5 513.5C1130.9 517.2 1146.8 520.2 1158 523.5C1169.2 526.8 1178.8 529.8 1188 533.5C1197.2 537.2 1203 540.6 1213 546C1223 551.4 1236.3 561 1248 566C1259.7 571 1273 574.3 1283 576C1293 577.7 1299.7 579.3 1308 576C1316.3 572.7 1324.7 563.5 1333 556C1341.3 548.5 1349.7 539.3 1358 531C1366.3 522.7 1375.1 513.2 1383 506C1390.9 498.8 1397.6 494.4 1405.5 487.7C1413.4 480.9 1420.1 472.1 1430.5 465.5C1440.9 458.9 1453.4 452.6 1468 448C1482.6 443.4 1503.4 442.6 1518 438C1532.6 433.4 1543 428 1555.5 420.5C1568 413 1582.6 401.3 1593 393C1603.4 384.7 1609.7 377.6 1618 370.5C1626.3 363.4 1633.8 356.8 1643 350.5C1652.2 344.2 1668.4 335.9 1673.5 333" stroke="#fcd768" stroke-width="5.5"/>
<path d="M1058 303C1062.2 303.8 1072.6 304.7 1083 308C1093.4 311.3 1108 318 1120.5 323C1133 328 1147.6 334.7 1158 338C1168.4 341.3 1172.6 343.4 1183 343C1193.4 342.6 1208 338.4 1220.5 335.5C1233 332.6 1245.5 329.2 1258 325.5C1270.5 321.8 1283 318.8 1295.5 313C1308 307.2 1319.3 299.2 1333 290.5C1346.7 281.8 1370.2 265.5 1377.7 260.5" stroke="#ffe6a0" stroke-width="8"/>
<path d="M1058 303C1062.2 303.8 1072.6 304.7 1083 308C1093.4 311.3 1108 318 1120.5 323C1133 328 1147.6 334.7 1158 338C1168.4 341.3 1172.6 343.4 1183 343C1193.4 342.6 1208 338.4 1220.5 335.5C1233 332.6 1245.5 329.2 1258 325.5C1270.5 321.8 1283 318.8 1295.5 313C1308 307.2 1319.3 299.2 1333 290.5C1346.7 281.8 1370.2 265.5 1377.7 260.5" stroke="#fcd768" stroke-width="5.5"/>
<path d="M1238 228C1239.7 232.2 1244.7 242.6 1248 253C1251.3 263.4 1254.7 280.9 1258 290.5C1261.3 300.1 1265.9 304.2 1268 310.5C1270.1 316.8 1271.3 318.8 1270.5 328C1269.7 337.2 1265.9 353 1263 365.5C1260.1 378 1255.9 390.5 1253 403C1250.1 415.5 1247.6 426.4 1245.5 440.5C1243.4 454.6 1242.1 474.4 1240.5 487.7C1238.9 500.9 1237.2 507.8 1236 520C1234.8 532.2 1234.3 550 1233 561C1231.7 572 1229.7 573.5 1228 586C1226.3 598.5 1224.7 619.3 1223 636C1221.3 652.7 1219.7 667.7 1218 686C1216.3 704.3 1213.8 736 1213 746" stroke="#ffe6a0" stroke-width="7"/>
<path d="M1238 228C1239.7 232.2 1244.7 242.6 1248 253C1251.3 263.4 1254.7 280.9 1258 290.5C1261.3 300.1 1265.9 304.2 1268 310.5C1270.1 316.8 1271.3 318.8 1270.5 328C1269.7 337.2 1265.9 353 1263 365.5C1260.1 378 1255.9 390.5 1253 403C1250.1 415.5 1247.6 426.4 1245.5 440.5C1243.4 454.6 1242.1 474.4 1240.5 487.7C1238.9 500.9 1237.2 507.8 1236 520C1234.8 532.2 1234.3 550 1233 561C1231.7 572 1229.7 573.5 1228 586C1226.3 598.5 1224.7 619.3 1223 636C1221.3 652.7 1219.7 667.7 1218 686C1216.3 704.3 1213.8 736 1213 746" stroke="#fcd768" stroke-width="4.5"/>
<path d="M1200 540C1215 530 1235 535 1240 548C1245 560 1235 570 1225 568M1213 546C1220 560 1235 575 1250 572M1228 586C1228 570 1240 560 1250 566" stroke="#fcd768" stroke-width="4"/>
</g>
<path d="M438 335.5C442.2 332.6 454.7 323.8 463 318C471.3 312.2 479.7 305.9 488 300.5C496.3 295.1 502.6 290.4 513 285.5C523.4 280.6 538 275.6 550.5 271C563 266.4 577.6 262.2 588 258C598.4 253.8 604.7 249.7 613 246C621.3 242.3 630.5 239.3 638 236C645.5 232.7 654.7 227.7 658 226" fill="none" stroke="#fff" stroke-opacity=".55" stroke-width="3.6" stroke-linejoin="round"/>
<path d="M438 335.5C442.2 332.6 454.7 323.8 463 318C471.3 312.2 479.7 305.9 488 300.5C496.3 295.1 502.6 290.4 513 285.5C523.4 280.6 538 275.6 550.5 271C563 266.4 577.6 262.2 588 258C598.4 253.8 604.7 249.7 613 246C621.3 242.3 630.5 239.3 638 236C645.5 232.7 654.7 227.7 658 226" fill="none" stroke="#b792dc" stroke-width="2" stroke-linejoin="round"/>
<path d="M728.5 226C731.8 227.6 740.6 232.7 748 235.5C755.4 238.3 762.6 239.2 773 243C783.4 246.8 798 252.8 810.5 258C823 263.2 836.8 269.7 848 274C859.2 278.3 865.5 281.7 878 284C890.5 286.3 907.2 286.7 923 288C938.8 289.3 957.6 291.3 973 291.7C988.4 292.1 1005.1 292.2 1015.5 290.5C1025.9 288.8 1028.4 285.3 1035.5 281.7C1042.6 278.1 1048 274.6 1058 269C1068 263.4 1083 255.2 1095.5 248C1108 240.8 1126.8 229.7 1133 226" fill="none" stroke="#fff" stroke-opacity=".55" stroke-width="3.6" stroke-linejoin="round"/>
<path d="M728.5 226C731.8 227.6 740.6 232.7 748 235.5C755.4 238.3 762.6 239.2 773 243C783.4 246.8 798 252.8 810.5 258C823 263.2 836.8 269.7 848 274C859.2 278.3 865.5 281.7 878 284C890.5 286.3 907.2 286.7 923 288C938.8 289.3 957.6 291.3 973 291.7C988.4 292.1 1005.1 292.2 1015.5 290.5C1025.9 288.8 1028.4 285.3 1035.5 281.7C1042.6 278.1 1048 274.6 1058 269C1068 263.4 1083 255.2 1095.5 248C1108 240.8 1126.8 229.7 1133 226" fill="none" stroke="#b792dc" stroke-width="2" stroke-linejoin="round"/>
<path d="M711.7 228C710.9 234.2 707.5 250.9 706.7 265.5C705.9 280.1 705.2 302.2 706.7 315.5C708.2 328.8 711.1 337.6 715.5 345.5C719.9 353.4 726 359.7 733 363C740 366.3 742.7 364.7 757.7 365.5C772.7 366.3 802.1 367.2 823 368C843.9 368.8 870.1 367.5 883 370C895.9 372.5 895.5 376.7 900.5 383C905.5 389.3 909.7 397.2 913 408C916.3 418.8 918.7 437.6 920.5 448C922.3 458.4 923 462.5 924 470.5C925 478.5 925.2 485.1 926.7 496C928.2 506.9 930.7 521 933 536C935.3 551 938 573.9 940.5 586C943 598.1 944.7 598.1 948 608.5C951.3 618.9 956.3 635.6 960.5 648.5C964.7 661.4 969.2 674.8 973 686C976.8 697.2 980.5 707.2 983 716C985.5 724.8 986.8 733.5 988 738.5C989.2 743.5 989.7 744.8 990 746" fill="none" stroke="#fff" stroke-opacity=".55" stroke-width="3.6" stroke-linejoin="round"/>
<path d="M711.7 228C710.9 234.2 707.5 250.9 706.7 265.5C705.9 280.1 705.2 302.2 706.7 315.5C708.2 328.8 711.1 337.6 715.5 345.5C719.9 353.4 726 359.7 733 363C740 366.3 742.7 364.7 757.7 365.5C772.7 366.3 802.1 367.2 823 368C843.9 368.8 870.1 367.5 883 370C895.9 372.5 895.5 376.7 900.5 383C905.5 389.3 909.7 397.2 913 408C916.3 418.8 918.7 437.6 920.5 448C922.3 458.4 923 462.5 924 470.5C925 478.5 925.2 485.1 926.7 496C928.2 506.9 930.7 521 933 536C935.3 551 938 573.9 940.5 586C943 598.1 944.7 598.1 948 608.5C951.3 618.9 956.3 635.6 960.5 648.5C964.7 661.4 969.2 674.8 973 686C976.8 697.2 980.5 707.2 983 716C985.5 724.8 986.8 733.5 988 738.5C989.2 743.5 989.7 744.8 990 746" fill="none" stroke="#bfae95" stroke-width="2" stroke-linejoin="round"/>
<path d="M1005.5 228C1006.3 230.1 1007.6 233.7 1010.5 240.5C1013.4 247.3 1018.4 257.3 1023 269C1027.6 280.7 1033.8 299.8 1038 310.5C1042.2 321.2 1042.2 321.8 1048 333C1053.8 344.2 1065.1 363.8 1073 378C1080.9 392.2 1089.2 409 1095.5 418C1101.8 427 1105.5 424.9 1110.5 432C1115.5 439.1 1120.5 451.2 1125.5 460.5C1130.5 469.8 1130.9 475.5 1140.5 487.7C1150.1 499.9 1167.6 518.4 1183 533.5C1198.4 548.6 1219.7 567.2 1233 578.5C1246.3 589.8 1250.5 590.6 1263 601C1275.5 611.4 1296.3 628.5 1308 641C1319.7 653.5 1326.3 664.3 1333 676C1339.7 687.7 1345.3 704.2 1348 711C1350.7 717.8 1348.8 716 1349 717" fill="none" stroke="#fff" stroke-opacity=".55" stroke-width="3.6" stroke-linejoin="round"/>
<path d="M1005.5 228C1006.3 230.1 1007.6 233.7 1010.5 240.5C1013.4 247.3 1018.4 257.3 1023 269C1027.6 280.7 1033.8 299.8 1038 310.5C1042.2 321.2 1042.2 321.8 1048 333C1053.8 344.2 1065.1 363.8 1073 378C1080.9 392.2 1089.2 409 1095.5 418C1101.8 427 1105.5 424.9 1110.5 432C1115.5 439.1 1120.5 451.2 1125.5 460.5C1130.5 469.8 1130.9 475.5 1140.5 487.7C1150.1 499.9 1167.6 518.4 1183 533.5C1198.4 548.6 1219.7 567.2 1233 578.5C1246.3 589.8 1250.5 590.6 1263 601C1275.5 611.4 1296.3 628.5 1308 641C1319.7 653.5 1326.3 664.3 1333 676C1339.7 687.7 1345.3 704.2 1348 711C1350.7 717.8 1348.8 716 1349 717" fill="none" stroke="#cdb95a" stroke-width="2" stroke-linejoin="round"/>
<path d="M1377.7 260.5C1370.2 264 1348.8 277.3 1333 281.7C1317.2 286.1 1299.7 284 1283 286.7C1266.3 289.4 1247.2 291.9 1233 298C1218.8 304.1 1208.4 313.8 1198 323C1187.6 332.2 1178 341.8 1170.5 353C1163 364.2 1159.2 377.2 1153 390.5C1146.8 403.8 1138 422.6 1133 433C1128 443.4 1125.9 446.3 1123 453C1120.1 459.7 1117.3 468.5 1115.5 473C1113.7 477.5 1112.6 478.8 1112 480" fill="none" stroke="#fff" stroke-opacity=".55" stroke-width="3.6" stroke-linejoin="round"/>
<path d="M1377.7 260.5C1370.2 264 1348.8 277.3 1333 281.7C1317.2 286.1 1299.7 284 1283 286.7C1266.3 289.4 1247.2 291.9 1233 298C1218.8 304.1 1208.4 313.8 1198 323C1187.6 332.2 1178 341.8 1170.5 353C1163 364.2 1159.2 377.2 1153 390.5C1146.8 403.8 1138 422.6 1133 433C1128 443.4 1125.9 446.3 1123 453C1120.1 459.7 1117.3 468.5 1115.5 473C1113.7 477.5 1112.6 478.8 1112 480" fill="none" stroke="#86c1f2" stroke-width="2" stroke-linejoin="round"/>
<path d="M1368 268C1376.3 263.8 1404.2 249.7 1418 243C1431.8 236.3 1445.1 230.5 1450.5 228" fill="none" stroke="#fff" stroke-opacity=".55" stroke-width="3.6" stroke-linejoin="round"/>
<path d="M1368 268C1376.3 263.8 1404.2 249.7 1418 243C1431.8 236.3 1445.1 230.5 1450.5 228" fill="none" stroke="#86c1f2" stroke-width="2" stroke-linejoin="round"/>
<path d="M600.5 746C606.8 743.9 621.3 738.5 638 733.5C654.7 728.5 682.2 721.8 700.5 716C718.8 710.2 727.6 705.7 748 699C768.4 692.3 798 683.2 823 676C848 668.8 870.5 663.1 898 656C925.5 648.9 965.9 639.8 988 633.5C1010.1 627.2 1018.8 624.9 1030.5 618.5C1042.2 612.1 1050.9 603.3 1058 595C1065.1 586.7 1067.6 579.2 1073 568.5C1078.4 557.8 1085.7 542.7 1090.5 531C1095.3 519.3 1098.1 507 1101.7 498.5C1105.3 490 1110.3 483.1 1112 480" fill="none" stroke="#fff" stroke-opacity=".55" stroke-width="4.1" stroke-linejoin="round"/>
<path d="M600.5 746C606.8 743.9 621.3 738.5 638 733.5C654.7 728.5 682.2 721.8 700.5 716C718.8 710.2 727.6 705.7 748 699C768.4 692.3 798 683.2 823 676C848 668.8 870.5 663.1 898 656C925.5 648.9 965.9 639.8 988 633.5C1010.1 627.2 1018.8 624.9 1030.5 618.5C1042.2 612.1 1050.9 603.3 1058 595C1065.1 586.7 1067.6 579.2 1073 568.5C1078.4 557.8 1085.7 542.7 1090.5 531C1095.3 519.3 1098.1 507 1101.7 498.5C1105.3 490 1110.3 483.1 1112 480" fill="none" stroke="#86c1f2" stroke-width="2.5" stroke-linejoin="round"/>
<path d="M1110.5 431.7C1113.4 436.1 1123 451.5 1128 458C1133 464.5 1133.4 465.8 1140.5 470.5C1147.6 475.2 1160.9 481.8 1170.5 486C1180.1 490.2 1186.8 492.9 1198 496C1209.2 499.1 1225.9 504.7 1238 504.7C1250.1 504.7 1260.1 499.1 1270.5 496C1280.9 492.9 1290.1 490.7 1300.5 486C1310.9 481.3 1324.2 474.3 1333 468C1341.8 461.7 1345.5 455.1 1353 448C1360.5 440.9 1364.8 433.4 1377.7 425.5C1390.6 417.6 1410.9 409.2 1430.5 400.5C1450.1 391.8 1472.6 383 1495.5 373C1518.4 363 1548.4 348.8 1568 340.5C1587.6 332.2 1600.5 328.8 1613 323C1625.5 317.2 1632.9 311.6 1643 305.5C1653.1 299.4 1668.4 289.8 1673.5 286.7" fill="none" stroke="#fff" stroke-opacity=".55" stroke-width="3.6" stroke-linejoin="round"/>
<path d="M1110.5 431.7C1113.4 436.1 1123 451.5 1128 458C1133 464.5 1133.4 465.8 1140.5 470.5C1147.6 475.2 1160.9 481.8 1170.5 486C1180.1 490.2 1186.8 492.9 1198 496C1209.2 499.1 1225.9 504.7 1238 504.7C1250.1 504.7 1260.1 499.1 1270.5 496C1280.9 492.9 1290.1 490.7 1300.5 486C1310.9 481.3 1324.2 474.3 1333 468C1341.8 461.7 1345.5 455.1 1353 448C1360.5 440.9 1364.8 433.4 1377.7 425.5C1390.6 417.6 1410.9 409.2 1430.5 400.5C1450.1 391.8 1472.6 383 1495.5 373C1518.4 363 1548.4 348.8 1568 340.5C1587.6 332.2 1600.5 328.8 1613 323C1625.5 317.2 1632.9 311.6 1643 305.5C1653.1 299.4 1668.4 289.8 1673.5 286.7" fill="none" stroke="#5e4e8e" stroke-width="2" stroke-linejoin="round"/>
<path d="M1326.7 228C1322.8 234.2 1311.1 253 1303 265.5C1294.9 278 1284.2 291.8 1278 303C1271.8 314.2 1269.2 319.7 1265.5 333C1261.8 346.3 1259.2 365.1 1255.5 383C1251.8 400.9 1245.8 423.1 1243 440.5C1240.2 457.9 1239.8 475.6 1239 487.7C1238.2 499.8 1239.5 496.6 1238.5 513C1237.5 529.4 1235.6 557.2 1233 586C1230.4 614.8 1225.9 659.3 1223 686C1220.1 712.7 1216.8 736 1215.5 746" fill="none" stroke="#fff" stroke-opacity=".55" stroke-width="3.6" stroke-linejoin="round"/>
<path d="M1326.7 228C1322.8 234.2 1311.1 253 1303 265.5C1294.9 278 1284.2 291.8 1278 303C1271.8 314.2 1269.2 319.7 1265.5 333C1261.8 346.3 1259.2 365.1 1255.5 383C1251.8 400.9 1245.8 423.1 1243 440.5C1240.2 457.9 1239.8 475.6 1239 487.7C1238.2 499.8 1239.5 496.6 1238.5 513C1237.5 529.4 1235.6 557.2 1233 586C1230.4 614.8 1225.9 659.3 1223 686C1220.1 712.7 1216.8 736 1215.5 746" fill="none" stroke="#dd4a60" stroke-width="2" stroke-linejoin="round"/>
<path d="M1238 228C1236.8 233 1231.8 246.3 1230.5 258C1229.2 269.7 1229.2 286.3 1230.5 298C1231.8 309.7 1234.2 313.8 1238 328C1241.8 342.2 1248.4 364.2 1253 383C1257.6 401.8 1261.8 423.1 1265.5 440.5C1269.2 457.9 1272.6 473 1275.5 487.7C1278.4 502.4 1277.6 516.3 1283 528.5C1288.4 540.7 1297.6 548.1 1308 561C1318.4 573.9 1335.5 593.9 1345.5 606C1355.5 618.1 1360.1 626 1368 633.5C1375.9 641 1382.6 646.6 1393 651C1403.4 655.4 1418 657.9 1430.5 659.7C1443 661.5 1455.1 660.1 1468 662C1480.9 663.9 1498 667.8 1508 671C1518 674.2 1523 675.6 1528 681C1533 686.4 1535.5 692.7 1538 703.5C1540.5 714.3 1542.2 738.9 1543 746" fill="none" stroke="#fff" stroke-opacity=".55" stroke-width="3.6" stroke-linejoin="round"/>
<path d="M1238 228C1236.8 233 1231.8 246.3 1230.5 258C1229.2 269.7 1229.2 286.3 1230.5 298C1231.8 309.7 1234.2 313.8 1238 328C1241.8 342.2 1248.4 364.2 1253 383C1257.6 401.8 1261.8 423.1 1265.5 440.5C1269.2 457.9 1272.6 473 1275.5 487.7C1278.4 502.4 1277.6 516.3 1283 528.5C1288.4 540.7 1297.6 548.1 1308 561C1318.4 573.9 1335.5 593.9 1345.5 606C1355.5 618.1 1360.1 626 1368 633.5C1375.9 641 1382.6 646.6 1393 651C1403.4 655.4 1418 657.9 1430.5 659.7C1443 661.5 1455.1 660.1 1468 662C1480.9 663.9 1498 667.8 1508 671C1518 674.2 1523 675.6 1528 681C1533 686.4 1535.5 692.7 1538 703.5C1540.5 714.3 1542.2 738.9 1543 746" fill="none" stroke="#b8445e" stroke-width="2" stroke-linejoin="round"/>
<path d="M1433 228C1433.4 230.5 1433.8 234.7 1435.5 243C1437.2 251.3 1437.6 263.8 1443 278C1448.4 292.2 1459.2 312.2 1468 328C1476.8 343.8 1488 357.2 1495.5 373C1503 388.8 1508 407.6 1513 423C1518 438.4 1523 456.3 1525.5 465.5C1528 474.7 1527 474.6 1528 478C1529 481.4 1530 482.6 1531.7 486C1533.4 489.4 1532 491.8 1538 498.5C1544 505.2 1556.8 515.6 1568 526C1579.2 536.4 1593 548.9 1605.5 561C1618 573.1 1631.7 586.4 1643 598.5C1654.3 610.6 1668.4 627.7 1673.5 633.5" fill="none" stroke="#fff" stroke-opacity=".55" stroke-width="3.6" stroke-linejoin="round"/>
<path d="M1433 228C1433.4 230.5 1433.8 234.7 1435.5 243C1437.2 251.3 1437.6 263.8 1443 278C1448.4 292.2 1459.2 312.2 1468 328C1476.8 343.8 1488 357.2 1495.5 373C1503 388.8 1508 407.6 1513 423C1518 438.4 1523 456.3 1525.5 465.5C1528 474.7 1527 474.6 1528 478C1529 481.4 1530 482.6 1531.7 486C1533.4 489.4 1532 491.8 1538 498.5C1544 505.2 1556.8 515.6 1568 526C1579.2 536.4 1593 548.9 1605.5 561C1618 573.1 1631.7 586.4 1643 598.5C1654.3 610.6 1668.4 627.7 1673.5 633.5" fill="none" stroke="#f08c3e" stroke-width="2" stroke-linejoin="round"/>
<path d="M1588 228C1589.7 236.3 1593.8 264.2 1598 278C1602.2 291.8 1608 299.7 1613 310.5C1618 321.3 1623.4 332.6 1628 343C1632.6 353.4 1638 363 1640.5 373C1643 383 1645.1 393.8 1643 403C1640.9 412.2 1636.3 420.5 1628 428C1619.7 435.5 1607.2 441.8 1593 448C1578.8 454.2 1557.2 459.7 1543 465.5C1528.8 471.3 1518.4 477.1 1508 483C1497.6 488.9 1488 494.2 1480.5 501C1473 507.8 1467.2 514.3 1463 523.5C1458.8 532.7 1455.9 545.6 1455.5 556C1455.1 566.4 1458.4 576 1460.5 586C1462.6 596 1466.8 603.9 1468 616C1469.2 628.1 1472.2 649.3 1468 658.5C1463.8 667.7 1455.5 666 1443 671C1430.5 676 1408.8 683.1 1393 688.5C1377.2 693.9 1362.2 699.8 1348 703.5C1333.8 707.2 1325.1 706.8 1308 711C1290.9 715.2 1266.3 724.8 1245.5 728.5C1224.7 732.2 1203.8 731.2 1183 733.5C1162.2 735.8 1137.7 739.9 1120.5 742C1103.3 744.1 1086.8 745.3 1080 746" fill="none" stroke="#fff" stroke-opacity=".55" stroke-width="3.6" stroke-linejoin="round"/>
<path d="M1588 228C1589.7 236.3 1593.8 264.2 1598 278C1602.2 291.8 1608 299.7 1613 310.5C1618 321.3 1623.4 332.6 1628 343C1632.6 353.4 1638 363 1640.5 373C1643 383 1645.1 393.8 1643 403C1640.9 412.2 1636.3 420.5 1628 428C1619.7 435.5 1607.2 441.8 1593 448C1578.8 454.2 1557.2 459.7 1543 465.5C1528.8 471.3 1518.4 477.1 1508 483C1497.6 488.9 1488 494.2 1480.5 501C1473 507.8 1467.2 514.3 1463 523.5C1458.8 532.7 1455.9 545.6 1455.5 556C1455.1 566.4 1458.4 576 1460.5 586C1462.6 596 1466.8 603.9 1468 616C1469.2 628.1 1472.2 649.3 1468 658.5C1463.8 667.7 1455.5 666 1443 671C1430.5 676 1408.8 683.1 1393 688.5C1377.2 693.9 1362.2 699.8 1348 703.5C1333.8 707.2 1325.1 706.8 1308 711C1290.9 715.2 1266.3 724.8 1245.5 728.5C1224.7 732.2 1203.8 731.2 1183 733.5C1162.2 735.8 1137.7 739.9 1120.5 742C1103.3 744.1 1086.8 745.3 1080 746" fill="none" stroke="#3f9f7b" stroke-width="2" stroke-linejoin="round"/>
<path d="M1000.5 703.5L1013 693.5L1064 683.5" fill="none" stroke="#4a60ae" stroke-opacity=".8" stroke-width="3.4" stroke-linejoin="round" stroke-linecap="round"/>
<path d="M1064 683.5L1045.5 646L1030.5 617" fill="none" stroke="#4f72de" stroke-opacity=".8" stroke-width="3.7" stroke-linejoin="round" stroke-linecap="round"/>
<path d="M1030.5 617L1058 593.5L1073 568.5" fill="none" stroke="#4a6edc" stroke-opacity=".8" stroke-width="4.2" stroke-linejoin="round" stroke-linecap="round"/>
<path d="M1073 568.5L1090.5 531L1101.7 498.5L1111.7 478L1125.5 453" fill="none" stroke="#4369d9" stroke-opacity=".8" stroke-width="5.3" stroke-linejoin="round" stroke-linecap="round"/>
<path d="M1125.5 453L1073 368" fill="none" stroke="#4369d9" stroke-opacity=".8" stroke-width="6.5" stroke-linejoin="round" stroke-linecap="round"/>
<defs>
<g id="sm"><circle r="9" fill="#fff" opacity=".92"/><path d="M6.600 -3.100A7.200 7.200 0 1 0 -7.100 1L-2.900 -2.400L0 1.300L2.900 -2.400L6.900 1.300A7.200 7.200 0 0 1 -6.100 4.200" fill="none" stroke="#dc3a58" stroke-width="2.500" stroke-linejoin="round"/></g>
<g id="st"><circle r="9.400" fill="#fff" opacity=".85"/><circle r="8.400" fill="#d8384a"/><circle r="5.600" fill="#e9434e"/><path d="M-4.900 2.700A5.600 5.600 0 0 1 1.600 -5.400M4.900 -2.700A5.600 5.600 0 0 1 -1.600 5.400" fill="none" stroke="#fff" stroke-width="1.150"/><path d="M.9 -7.300l3 2.300-3.300 1.200zM-.9 7.300l-3-2.300 3.300-1.200z" fill="#fff"/></g>
<g id="pin"><path d="M-3.300 7.500h6.600L0 11.800z"/><circle r="9"/></g>
<g id="ghouse" fill="#fff"><path d="M0 -5.800l6 4.300h-1.300v5.300h-9.400v-5.300h-1.300z"/><rect x="-2.800" y="-1" width="1.700" height="2" fill="#2e9fe6"/><rect x="1.100" y="-1" width="1.700" height="2" fill="#2e9fe6"/><rect x="-.9" y="1.500" width="1.800" height="2.300" fill="#2e9fe6"/></g>
<g id="gbld" fill="#fff"><path d="M-2.800 -5.500h5.600v9h-5.600z"/><path d="M-5 1h10v3h-10z" opacity=".85"/><rect x="-1.200" y="-3.800" width="2.400" height="1.200" fill="#2e9fe6"/><rect x="-1.200" y="-1.600" width="2.400" height="1.200" fill="#2e9fe6"/></g>
<g id="gtree" fill="#fff"><path d="M-2.800 -5.500l2.600 6.500h-5.200zM2.800 -5.500l2.600 6.500h-5.200z"/><rect x="-3.300" y="1" width="1" height="3"/><rect x="2.300" y="1" width="1" height="3"/><rect x="-5" y="3.800" width="10" height="1.200"/></g>
<g id="gshop" fill="#fff"><path d="M-4.500 -4h9l.8 8.300h-10.600z"/><path d="M-2.300 -2.300a2.300 2.300 0 0 0 4.600 0" fill="none" stroke="#a567ea" stroke-width="1.200"/></g>
<g id="gbed" fill="#fff"><path d="M-5.500 -4.500h1.500v4h9.500v5h-1.500v-1.800h-8v1.800h-1.500z"/><circle cx="-1.800" cy="-2.300" r="1.400"/><path d="M.3 -3.500h3a2 2 0 0 1 2 2v.6h-5z"/></g>
<g id="gcar" fill="#fff"><path d="M-3.800 -4.500h7.600l1.700 3.500v4.800h-2v-1.400h-7v1.400h-2v-4.800z"/><rect x="-3.200" y="-3.300" width="6.400" height="2.300" fill="#2e9fe6"/><circle cx="-3.300" cy=".8" r=".9" fill="#2e9fe6"/><circle cx="3.300" cy=".8" r=".9" fill="#2e9fe6"/></g>
</defs>
<g font-family="'Noto Sans CJK SC','Liberation Sans',sans-serif" font-size="12" fill="#454850" stroke="#fff" stroke-width="2.600" stroke-linejoin="round" paint-order="stroke" text-anchor="middle">
<use href="#sm" x="620.5" y="244" stroke="none"/>
<text x="621.7" y="266.3">水城路</text>
<use href="#st" x="456.7" y="325.5" stroke="none"/>
<text x="458" y="347.8">龙溪路</text>
<use href="#sm" x="790.5" y="250.5" stroke="none"/>
<text x="791" y="272.8">伊犁路</text>
<use href="#st" x="1023" y="269" stroke="none"/>
<text x="993" y="274.3">虹桥路</text>
<use href="#sm" x="813.5" y="365.5" stroke="none"/>
<text x="814" y="388.8">姚虹路</text>
<use href="#sm" x="924" y="474" stroke="none"/>
<text x="924" y="497.3">吴中路</text>
<use href="#st" x="1231.7" y="313" stroke="none"/>
<text x="1261" y="317.8">徐家汇</text>
<use href="#st" x="1109" y="431.7" stroke="none"/>
<text x="1138.5" y="437.3">宜山路</text>
<use href="#st" x="1111.7" y="476.7" stroke="none"/>
<text x="1113" y="499.8">宜山路</text>
<use href="#sm" x="1335" y="456.7" stroke="none"/>
<text x="1335.5" y="479.8">上海体育场</text>
<use href="#st" x="1435" y="244" stroke="none"/>
<text x="1435.5" y="266.3">肇嘉浜路</text>
<use href="#st" x="1613" y="323" stroke="none"/>
<text x="1647" y="328.3">大木桥路</text>
<use href="#st" x="1495.5" y="373" stroke="none"/>
<text x="1496.7" y="396.3">东安路</text>
<use href="#st" x="1528" y="478" stroke="none"/>
<text x="1563.5" y="482.8">龙华中路</text>
<use href="#sm" x="701.7" y="709" stroke="none"/>
<text x="711" y="713.8" text-anchor="start">漕河泾开发区</text>
<use href="#st" x="946.7" y="608.5" stroke="none"/>
<text x="917.5" y="613.3">桂林路</text>
<use href="#st" x="988.7" y="632" stroke="none"/>
<text x="1018.5" y="637.3">桂林路</text>
<use href="#st" x="989" y="744" stroke="none"/>
<use href="#st" x="1238.5" y="513" stroke="none"/>
<text x="1238.5" y="536.3">上海体育馆</text>
<use href="#sm" x="1264" y="601" stroke="none"/>
<text x="1265" y="623.3">漕溪路</text>
<use href="#st" x="1193" y="731" stroke="none"/>
<text x="1164" y="736.3">漕宝路</text>
<use href="#st" x="1349" y="717" stroke="none"/>
<text x="1350" y="739.3">龙漕路</text>
<use href="#st" x="1468" y="664" stroke="none"/>
<text x="1445" y="669.3">龙华</text>
<g transform="translate(671.7 279)" stroke="none"><use href="#pin" fill="#6a6cf0"/><use href="#gbed"/></g>
<text x="671.7" y="302.3">上海千禧</text>
<text x="671.7" y="314.8">海鸥大酒店</text>
<g transform="translate(630 338)" stroke="none"><use href="#pin" fill="#2e9fe6"/><use href="#ghouse"/></g>
<text x="594" y="342.8">古北新区</text>
<g transform="translate(491.7 404)" stroke="none"><use href="#pin" fill="#2e9fe6"/><use href="#ghouse"/></g>
<text x="479" y="408.8" text-anchor="end">嘉年别墅</text>
<g transform="translate(676.7 448)" stroke="none"><use href="#pin" fill="#2e9fe6"/><use href="#ghouse"/></g>
<text x="676.7" y="470.3">古北壹号</text>
<g transform="translate(755.5 384)" stroke="none"><use href="#pin" fill="#2e9fe6"/><use href="#ghouse"/></g>
<text x="758" y="407.3">臻园</text>
<g transform="translate(880.5 305.5)" stroke="none"><use href="#pin" fill="#2bc06c"/><use href="#gtree"/></g>
<text x="880.5" y="328.3">中华人民共和国名誉</text>
<text x="880.5" y="341.3">主席宋庆龄陵园</text>
<g transform="translate(974 295.5)" stroke="none"><use href="#pin" fill="#2e9fe6"/><use href="#ghouse"/></g>
<text x="974" y="318.3">丽景苑</text>
<text x="988" y="240.8">安东小区</text>
<text x="740" y="230.8">新虹桥中心花园</text>
<g transform="translate(795.5 222)" stroke="none"><use href="#pin" fill="#2bc06c"/><use href="#gtree"/></g>
<g transform="translate(798 467)" stroke="none"><use href="#pin" fill="#2e9fe6"/><use href="#gbld"/></g>
<text x="798" y="488.8">涵博大厦</text>
<g transform="translate(1321.7 264)" stroke="none"><use href="#pin" fill="#2bc06c"/><use href="#gtree"/></g>
<text x="1323" y="287.3">徐家汇公园</text>
<g transform="translate(1213 390.5)" stroke="none"><use href="#pin" fill="#2bc06c"/><use href="#gtree"/></g>
<text x="1248" y="395.8">光启公园</text>
<g transform="translate(1094 323)" stroke="none"><use href="#pin" fill="#2e9fe6"/><use href="#gbld"/></g>
<g transform="translate(1625.5 234)" stroke="none"><use href="#pin" fill="#2e9fe6"/><use href="#gbld"/></g>
<text x="1625.5" y="256.8">之俊大厦</text>
<g transform="translate(1487.5 414)" stroke="none"><use href="#pin" fill="#2e9fe6"/><use href="#ghouse"/></g>
<text x="1533.5" y="419.8">东安二村社区</text>
<g transform="translate(446.7 570.5)" stroke="none"><use href="#pin" fill="#2e9fe6"/><use href="#gbld"/></g>
<text x="491.7" y="574.8">近铁虹桥中心</text>
<text x="445" y="531.3">场</text>
<g transform="translate(489 626.5)" stroke="none"><use href="#pin" fill="#2e9fe6"/><use href="#gcar"/></g>
<text x="517" y="632.8">汽车街</text>
<g transform="translate(487.5 668)" stroke="none"><use href="#pin" fill="#a567ea"/><use href="#gshop"/></g>
<text x="515" y="674.3">利邻荟</text>
<g transform="translate(602.5 631)" stroke="none"><use href="#pin" fill="#2e9fe6"/><use href="#ghouse"/></g>
<text x="632" y="635.8">苹果园</text>
<g transform="translate(712.5 510.5)" stroke="none"><use href="#pin" fill="#2e9fe6"/><use href="#gbld"/></g>
<text x="724" y="515.3" text-anchor="start">吴中大厦</text>
<g transform="translate(718.5 538)" stroke="none"><use href="#pin" fill="#2e9fe6"/><use href="#ghouse"/></g>
<text x="719" y="559.3">明申花园</text>
<g transform="translate(705 739.7)" stroke="none"><use href="#pin" fill="#2e9fe6"/><use href="#gbld"/></g>
<text x="654" y="745.3">凯科国际大厦</text>
<g transform="translate(755 581)" stroke="none"><use href="#pin" fill="#2e9fe6"/><use href="#gbld"/></g>
<text x="807" y="585.8">漕河泾科汇大厦</text>
<g transform="translate(994 535.5)" stroke="none"><use href="#pin" fill="#a567ea"/><use href="#gshop"/></g>
<text x="994" y="558.3">田尚坊时尚</text>
<text x="994" y="570.8">生活中心</text>
<g transform="translate(771 654.7)" stroke="none"><use href="#pin" fill="#2e9fe6"/><use href="#gbld"/></g>
<text x="818.5" y="659.8">创业中心大厦</text>
<g transform="translate(933.7 663)" stroke="none"><use href="#pin" fill="#2e9fe6"/><use href="#gbld"/></g>
<text x="934" y="684.8">华鑫中心</text>
<g transform="translate(1179.7 536)" stroke="none"><use href="#pin" fill="#2e9fe6"/><use href="#gbld"/></g>
<text x="1144" y="541.3">华鼎大厦</text>
<g transform="translate(1204.700 579.700)" stroke="none"><use href="#pin" fill="#14306e"/><ellipse rx="6.300" ry="2.800" fill="#f6d32a"/><rect x="-4" y="-.8" width="8" height="1.600" fill="#14306e" stroke="none"/></g>
<g transform="translate(1194.7 638)" stroke="none"><use href="#pin" fill="#a567ea"/><use href="#gshop"/></g>
<text x="1159" y="642.8">汇阳广场</text>
<g transform="translate(1278.5 659.7)" stroke="none"><use href="#pin" fill="#2e9fe6"/><use href="#ghouse"/></g>
<text x="1313" y="664.8">南一小区</text>
<g transform="translate(1233 674.7)" stroke="none"><use href="#pin" fill="#2bc06c"/><use href="#gtree"/></g>
<text x="1196.5" y="679.8">漕溪公园</text>
<g transform="translate(1489 584)" stroke="none"><use href="#pin" fill="#2e9fe6"/><use href="#ghouse"/></g>
<text x="1524.5" y="589.3">盛大花园</text>
<g transform="translate(1564.7 664)" stroke="none"><use href="#pin" fill="#2e9fe6"/><use href="#ghouse"/></g>
<text x="1594" y="669.3">百汇园</text>
<g transform="translate(1501.7 733)" stroke="none"><use href="#pin" fill="#2e9fe6"/><use href="#ghouse"/></g>
<text x="1465.5" y="738.3">金龙花苑</text>
<text x="648" y="392.3" fill="#9a9fa8" font-size="13">名都城</text>
<text x="1590.5" y="701.8" font-size="13.500">丰谷路</text>
<text x="765" y="714.3">开发区</text>
<text x="920.5" y="386.3">宋</text>
<text x="920.5" y="398.8">园</text>
<text x="920.5" y="411.3">路</text>
<text x="1603" y="569">龙</text>
<text x="1597" y="584">腾</text>
<text x="1595.5" y="597.8">大</text>
<text x="1592" y="608.8">道</text>
</g>
<g font-family="'Noto Sans CJK SC','Liberation Sans',sans-serif" font-size="13.500" fill="#111" stroke="#fff" stroke-width="2.800" stroke-linejoin="round" paint-order="stroke" text-anchor="middle">
<text transform="translate(530.500 281) rotate(-29)" y="4.700">虹桥路</text>
<text transform="translate(575.9 452.5) rotate(-27)" y="4.300" font-size="12" fill="#3c4354">虹</text>
<text transform="translate(582.1 463.6) rotate(-27)" y="4.300" font-size="12" fill="#3c4354">梅</text>
<text transform="translate(589.4 475.1) rotate(-27)" y="4.300" font-size="12" fill="#3c4354">路</text>
<text transform="translate(1189.500 344.500) rotate(-13)" y="4.700" font-size="14">虹桥路</text>
<text transform="translate(1003.4 360.4) rotate(-31)" y="4.900" font-size="14">内</text>
<text transform="translate(1009.5 370.7) rotate(-31)" y="4.900" font-size="14">环</text>
<text transform="translate(1016.5 383.3) rotate(-31)" y="4.900" font-size="14">高</text>
<text transform="translate(1024.2 395.6) rotate(-31)" y="4.900" font-size="14">架</text>
<text transform="translate(1032.4 407.9) rotate(-31)" y="4.900" font-size="14">路</text>
<text transform="translate(1344 546) rotate(-40)" y="4.700" font-size="14">内环高架路</text>
<text x="1100.500" y="750" font-size="14.500" font-weight="bold">漕宝路</text>
<text transform="translate(1663 453) rotate(-28)" y="4.300" font-size="12" fill="#3c4354" text-anchor="start" x="-14">瑞宁路</text>
<text transform="translate(844 537) rotate(-21)" y="4.300" font-size="12.500" fill="#4a86cc">蒲汇塘</text>
<text x="1645.5" y="674.2" font-size="12.500" fill="#3f7fc6" stroke="#a9d2fa" stroke-width="2">黄</text>
<text x="1650.5" y="688.0" font-size="12.500" fill="#3f7fc6" stroke="#a9d2fa" stroke-width="2">浦</text>
<text x="1654" y="701.5" font-size="12.500" fill="#3f7fc6" stroke="#a9d2fa" stroke-width="2">江</text>
</g>
<g font-family="'Noto Sans CJK SC','Liberation Sans',sans-serif" font-size="10" fill="#fff" text-anchor="middle" font-weight="400"><rect x="1563" y="331.500" width="40" height="12" rx="4" fill="#3f8fb8"/><text x="1583" y="341.300">4号线</text><rect x="1478" y="665.500" width="46" height="11.500" rx="4" fill="#c9465c"/><text x="1501" y="675.200">11号线</text></g>
<g><ellipse cx="1052" cy="256" rx="9" ry="3.500" fill="#000" opacity=".22" transform="rotate(-28 1052 256)"/><path d="M1040 267.500l-5-7.500h10z" fill="#fff" stroke="#6b6b6b" stroke-width=".8"/><circle cx="1040" cy="250" r="12.600" fill="#fff" stroke="#777" stroke-width=".8"/><circle cx="1040" cy="250" r="10.600" fill="#d0121b"/><text x="1040" y="254.800" font-family="'Noto Sans CJK SC',sans-serif" font-size="13" font-weight="bold" fill="#fff" text-anchor="middle">终</text></g>
<g><circle cx="1000.500" cy="704" r="2" fill="#4466aa"/><path d="M1000.500 703.500l-5-7.500h10z" fill="#fff" stroke="#555" stroke-width=".8"/><circle cx="1000.500" cy="687" r="12.400" fill="#fff" stroke="#444" stroke-width="1"/><circle cx="1000.500" cy="687" r="10.400" fill="#1f9a35"/><text x="1000.500" y="691.800" font-family="'Noto Sans CJK SC',sans-serif" font-size="13" font-weight="bold" fill="#fff" text-anchor="middle">起</text></g>
<g transform="translate(1062 352.500) rotate(-33)" fill="#1f8fd9"><path d="M0 -31C3.500 -31 6 -27 6 -21V-9L30 10.500C32 12 31 14.500 28.500 14.500L6 7V17L16.500 24C18 25 17 28 15 27.500L3 25L0 30L-3 25L-15 27.500C-17 28 -18 25 -16.500 24L-6 17V7L-28.500 14.500C-31 14.500 -32 12 -30 10.500L-6 -9V-21C-6 -27 -3.500 -31 0 -31Z"/></g>
<g><rect x="1090.500" y="311.500" width="66" height="21.500" fill="#fff" stroke="#cf2f2f" stroke-width="1"/><text x="1093.500" y="327.500" font-family="'Liberation Sans','Noto Sans CJK SC',sans-serif" font-size="13" fill="#000" textLength="61" lengthAdjust="spacingAndGlyphs">马航MH370</text></g>
</svg>
<div class="abs" id="route" style="left:1px;top:519px;width:1236px;height:251px">
<div class="abs rt" style="left:8px;top:12px">步行前往 终点 的路线</div>
<div class="abs" style="left:1px;top:44px;width:1233px;height:54px;background:#e3eaf6"></div>
<div class="abs" style="left:1px;top:44px;width:54px;height:21px;background:#2285e2;color:#fff;font-size:12px;line-height:20px;text-align:center">推荐</div>
<svg class="abs" style="left:1218px;top:55px" width="10" height="6" viewBox="0 0 10 6"><path d="M0 5.500h9L4.500 .5z" fill="#c6cedb"/></svg>
<div class="abs" style="left:26px;top:74.5px;font-size:12.800px;line-height:20px;color:#222;font-family:'Liberation Sans','Noto Sans CJK SC',sans-serif">3.8 公里&nbsp; |&nbsp; 55 分钟</div>
<div class="abs" style="left:15px;top:112.5px;width:9px;height:9px;border-radius:50%;border:2px solid #86cf7c;background:#fff"></div>
<div class="abs" style="left:34px;top:106.5px;font-size:12px;line-height:20px;color:#222">起点</div>
<div class="abs st" style="left:11px;top:145px">从<b>起点</b>向正北方向出发,走40米,<b>右转</b>进入<b>田林路</b></div>
<div class="abs st" style="left:11px;top:185.70000000000005px">沿<b>田林路</b>走460米,<b>左转</b>进入<b>柳州路</b></div>
<div class="abs st" style="left:11px;top:226.5px">沿<b>柳州路</b>走520米,<b>直走过斑马线</b>,<b>右转</b>进入<b>宜山路</b></div>
<div class="abs" style="left:1px;top:175px;width:1233px;height:1px;background:#e6e6e6"></div>
<div class="abs" style="left:1px;top:216px;width:1233px;height:1px;background:#e6e6e6"></div>
</div>
<div class="abs" style="left:1237px;top:0;width:12px;height:770px;background:#f1f1f1"></div>
<div class="abs" style="left:1237px;top:0;width:12px;height:538px;background:#c1c1c1"></div>
</div>
</div>
</div>
<div id="statusbar"><div class="tx">要将输入定向到该虚拟机，请将鼠标指针移入其中或按 Ctrl+G。</div><svg class="abs" style="left:1732px;top:3px" width="170" height="24" viewBox="1732 1007 170 24"><g fill="none" stroke="#777" stroke-width="1.300"><path d="M1738 1025l2.500-11h13l2.500 11z"/><path d="M1738 1025h18"/><circle cx="1772" cy="1018" r="8" stroke="#c9c9c9"/><circle cx="1772" cy="1018" r="2" stroke="#c9c9c9"/><rect x="1789.500" y="1010.500" width="9" height="7"/><rect x="1796.500" y="1015.500" width="9" height="7"/><path d="M1789 1024h6" stroke-dasharray="1.500 1.500"/><g stroke="#c4c4c4"><rect x="1815.500" y="1017.500" width="15" height="7"/><path d="M1818.500 1017v-5h9v5M1818.500 1022v5h9v-5"/></g><path d="M1840 1015h3l4.500-4v15l-4.500-4h-3z"/><path d="M1850.500 1014.500a6 6 0 0 1 0 8" stroke="#aaa"/></g><circle cx="1752.500" cy="1024" r="3" fill="#2bc4a8"/><circle cx="1802.500" cy="1024" r="3" fill="#2bc4a8"/><circle cx="1852.500" cy="1024" r="3" fill="#8bc43f"/><path d="M1864.500 1008v22" stroke="#c9c9c9"/><path d="M1876 1010h17v12l-5 5h-12z" fill="#2fd6b8" stroke="#7a8a88" stroke-width="1"/></svg></div>
<div id="taskbar"><div class="abs" style="left:244px;top:0;width:60px;height:9px;background:#4a5d68"></div></div>
</body>
</html>
